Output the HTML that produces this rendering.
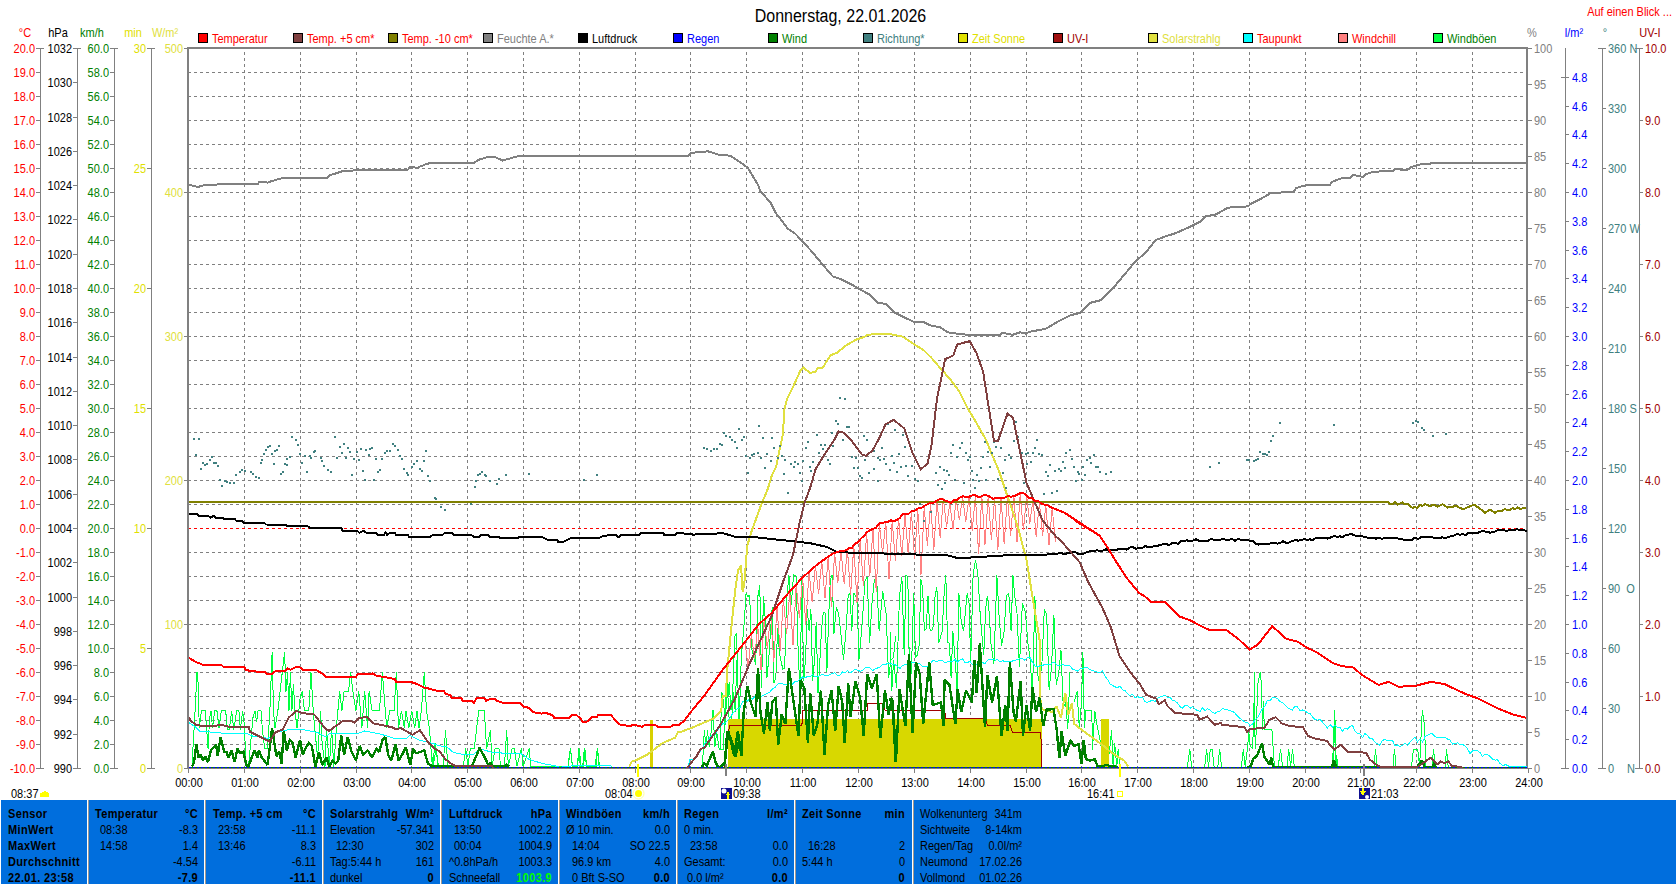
<!DOCTYPE html>
<html><head><meta charset="utf-8"><style>
html,body{margin:0;padding:0;background:#fff;width:1677px;height:884px;overflow:hidden}
svg{display:block;font-family:"Liberation Sans", sans-serif}
</style></head><body>
<svg width="1677" height="884" viewBox="0 0 1677 884" shape-rendering="crispEdges">
<text transform="translate(840.5,22) scale(1,1.1)" x="0" y="0" fill="#000" text-anchor="middle" font-size="16" font-weight="normal" >Donnerstag, 22.01.2026</text>
<text transform="translate(1672,16) scale(1,1.1)" x="0" y="0" fill="#ff0000" text-anchor="end" font-size="11" font-weight="normal" >Auf einen Blick ...</text>
<rect x="198.5" y="33.5" width="9" height="9" fill="#ff0000" stroke="#000" stroke-width="1"/>
<text transform="translate(212.0,43) scale(1,1.1)" x="0" y="0" fill="#ff0000" text-anchor="start" font-size="11" font-weight="normal" >Temperatur</text>
<rect x="293.5" y="33.5" width="9" height="9" fill="#804040" stroke="#000" stroke-width="1"/>
<text transform="translate(307.0,43) scale(1,1.1)" x="0" y="0" fill="#ff0000" text-anchor="start" font-size="11" font-weight="normal" >Temp. +5 cm*</text>
<rect x="388.5" y="33.5" width="9" height="9" fill="#808000" stroke="#000" stroke-width="1"/>
<text transform="translate(402.0,43) scale(1,1.1)" x="0" y="0" fill="#ff0000" text-anchor="start" font-size="11" font-weight="normal" >Temp. -10 cm*</text>
<rect x="483.5" y="33.5" width="9" height="9" fill="#808080" stroke="#000" stroke-width="1"/>
<text transform="translate(497.0,43) scale(1,1.1)" x="0" y="0" fill="#808080" text-anchor="start" font-size="11" font-weight="normal" >Feuchte A.*</text>
<rect x="578.5" y="33.5" width="9" height="9" fill="#000000" stroke="#000" stroke-width="1"/>
<text transform="translate(592.0,43) scale(1,1.1)" x="0" y="0" fill="#000000" text-anchor="start" font-size="11" font-weight="normal" >Luftdruck</text>
<rect x="673.5" y="33.5" width="9" height="9" fill="#0000ff" stroke="#000" stroke-width="1"/>
<text transform="translate(687.0,43) scale(1,1.1)" x="0" y="0" fill="#0000ff" text-anchor="start" font-size="11" font-weight="normal" >Regen</text>
<rect x="768.5" y="33.5" width="9" height="9" fill="#008000" stroke="#000" stroke-width="1"/>
<text transform="translate(782.0,43) scale(1,1.1)" x="0" y="0" fill="#008000" text-anchor="start" font-size="11" font-weight="normal" >Wind</text>
<rect x="863.5" y="33.5" width="9" height="9" fill="#408080" stroke="#000" stroke-width="1"/>
<text transform="translate(877.0,43) scale(1,1.1)" x="0" y="0" fill="#408080" text-anchor="start" font-size="11" font-weight="normal" >Richtung*</text>
<rect x="958.5" y="33.5" width="9" height="9" fill="#e0e000" stroke="#000" stroke-width="1"/>
<text transform="translate(972.0,43) scale(1,1.1)" x="0" y="0" fill="#e0e000" text-anchor="start" font-size="11" font-weight="normal" >Zeit Sonne</text>
<rect x="1053.5" y="33.5" width="9" height="9" fill="#a01010" stroke="#000" stroke-width="1"/>
<text transform="translate(1067.0,43) scale(1,1.1)" x="0" y="0" fill="#a00000" text-anchor="start" font-size="11" font-weight="normal" >UV-I</text>
<rect x="1148.5" y="33.5" width="9" height="9" fill="#e0e040" stroke="#000" stroke-width="1"/>
<text transform="translate(1162.0,43) scale(1,1.1)" x="0" y="0" fill="#e0e040" text-anchor="start" font-size="11" font-weight="normal" >Solarstrahlg</text>
<rect x="1243.5" y="33.5" width="9" height="9" fill="#00ffff" stroke="#000" stroke-width="1"/>
<text transform="translate(1257.0,43) scale(1,1.1)" x="0" y="0" fill="#ff0000" text-anchor="start" font-size="11" font-weight="normal" >Taupunkt</text>
<rect x="1338.5" y="33.5" width="9" height="9" fill="#ff8080" stroke="#000" stroke-width="1"/>
<text transform="translate(1352.0,43) scale(1,1.1)" x="0" y="0" fill="#ff0000" text-anchor="start" font-size="11" font-weight="normal" >Windchill</text>
<rect x="1433.5" y="33.5" width="9" height="9" fill="#00ff40" stroke="#000" stroke-width="1"/>
<text transform="translate(1447.0,43) scale(1,1.1)" x="0" y="0" fill="#008000" text-anchor="start" font-size="11" font-weight="normal" >Windböen</text>
<line x1="40.5" y1="48" x2="40.5" y2="768" stroke="#808080" stroke-width="1" />
<line x1="77.5" y1="48" x2="77.5" y2="768" stroke="#808080" stroke-width="1" />
<line x1="114.5" y1="48" x2="114.5" y2="768" stroke="#808080" stroke-width="1" />
<line x1="151.5" y1="48" x2="151.5" y2="768" stroke="#808080" stroke-width="1" />
<text transform="translate(25,37) scale(1,1.1)" x="0" y="0" fill="#ff0000" text-anchor="middle" font-size="11" font-weight="normal" >°C</text>
<line x1="36" y1="48.5" x2="44" y2="48.5" stroke="#808080" stroke-width="1" />
<text transform="translate(35,53) scale(1,1.1)" x="0" y="0" fill="#ff0000" text-anchor="end" font-size="11" font-weight="normal" >20.0</text>
<line x1="36" y1="72.5" x2="41" y2="72.5" stroke="#808080" stroke-width="1" />
<text transform="translate(35,77) scale(1,1.1)" x="0" y="0" fill="#ff0000" text-anchor="end" font-size="11" font-weight="normal" >19.0</text>
<line x1="36" y1="96.5" x2="41" y2="96.5" stroke="#808080" stroke-width="1" />
<text transform="translate(35,101) scale(1,1.1)" x="0" y="0" fill="#ff0000" text-anchor="end" font-size="11" font-weight="normal" >18.0</text>
<line x1="36" y1="120.5" x2="41" y2="120.5" stroke="#808080" stroke-width="1" />
<text transform="translate(35,125) scale(1,1.1)" x="0" y="0" fill="#ff0000" text-anchor="end" font-size="11" font-weight="normal" >17.0</text>
<line x1="36" y1="144.5" x2="41" y2="144.5" stroke="#808080" stroke-width="1" />
<text transform="translate(35,149) scale(1,1.1)" x="0" y="0" fill="#ff0000" text-anchor="end" font-size="11" font-weight="normal" >16.0</text>
<line x1="36" y1="168.5" x2="41" y2="168.5" stroke="#808080" stroke-width="1" />
<text transform="translate(35,173) scale(1,1.1)" x="0" y="0" fill="#ff0000" text-anchor="end" font-size="11" font-weight="normal" >15.0</text>
<line x1="36" y1="192.5" x2="41" y2="192.5" stroke="#808080" stroke-width="1" />
<text transform="translate(35,197) scale(1,1.1)" x="0" y="0" fill="#ff0000" text-anchor="end" font-size="11" font-weight="normal" >14.0</text>
<line x1="36" y1="216.5" x2="41" y2="216.5" stroke="#808080" stroke-width="1" />
<text transform="translate(35,221) scale(1,1.1)" x="0" y="0" fill="#ff0000" text-anchor="end" font-size="11" font-weight="normal" >13.0</text>
<line x1="36" y1="240.5" x2="41" y2="240.5" stroke="#808080" stroke-width="1" />
<text transform="translate(35,245) scale(1,1.1)" x="0" y="0" fill="#ff0000" text-anchor="end" font-size="11" font-weight="normal" >12.0</text>
<line x1="36" y1="264.5" x2="41" y2="264.5" stroke="#808080" stroke-width="1" />
<text transform="translate(35,269) scale(1,1.1)" x="0" y="0" fill="#ff0000" text-anchor="end" font-size="11" font-weight="normal" >11.0</text>
<line x1="36" y1="288.5" x2="41" y2="288.5" stroke="#808080" stroke-width="1" />
<text transform="translate(35,293) scale(1,1.1)" x="0" y="0" fill="#ff0000" text-anchor="end" font-size="11" font-weight="normal" >10.0</text>
<line x1="36" y1="312.5" x2="41" y2="312.5" stroke="#808080" stroke-width="1" />
<text transform="translate(35,317) scale(1,1.1)" x="0" y="0" fill="#ff0000" text-anchor="end" font-size="11" font-weight="normal" >9.0</text>
<line x1="36" y1="336.5" x2="41" y2="336.5" stroke="#808080" stroke-width="1" />
<text transform="translate(35,341) scale(1,1.1)" x="0" y="0" fill="#ff0000" text-anchor="end" font-size="11" font-weight="normal" >8.0</text>
<line x1="36" y1="360.5" x2="41" y2="360.5" stroke="#808080" stroke-width="1" />
<text transform="translate(35,365) scale(1,1.1)" x="0" y="0" fill="#ff0000" text-anchor="end" font-size="11" font-weight="normal" >7.0</text>
<line x1="36" y1="384.5" x2="41" y2="384.5" stroke="#808080" stroke-width="1" />
<text transform="translate(35,389) scale(1,1.1)" x="0" y="0" fill="#ff0000" text-anchor="end" font-size="11" font-weight="normal" >6.0</text>
<line x1="36" y1="408.5" x2="41" y2="408.5" stroke="#808080" stroke-width="1" />
<text transform="translate(35,413) scale(1,1.1)" x="0" y="0" fill="#ff0000" text-anchor="end" font-size="11" font-weight="normal" >5.0</text>
<line x1="36" y1="432.5" x2="41" y2="432.5" stroke="#808080" stroke-width="1" />
<text transform="translate(35,437) scale(1,1.1)" x="0" y="0" fill="#ff0000" text-anchor="end" font-size="11" font-weight="normal" >4.0</text>
<line x1="36" y1="456.5" x2="41" y2="456.5" stroke="#808080" stroke-width="1" />
<text transform="translate(35,461) scale(1,1.1)" x="0" y="0" fill="#ff0000" text-anchor="end" font-size="11" font-weight="normal" >3.0</text>
<line x1="36" y1="480.5" x2="41" y2="480.5" stroke="#808080" stroke-width="1" />
<text transform="translate(35,485) scale(1,1.1)" x="0" y="0" fill="#ff0000" text-anchor="end" font-size="11" font-weight="normal" >2.0</text>
<line x1="36" y1="504.5" x2="41" y2="504.5" stroke="#808080" stroke-width="1" />
<text transform="translate(35,509) scale(1,1.1)" x="0" y="0" fill="#ff0000" text-anchor="end" font-size="11" font-weight="normal" >1.0</text>
<line x1="36" y1="528.5" x2="41" y2="528.5" stroke="#808080" stroke-width="1" />
<text transform="translate(35,533) scale(1,1.1)" x="0" y="0" fill="#ff0000" text-anchor="end" font-size="11" font-weight="normal" >0.0</text>
<line x1="36" y1="552.5" x2="41" y2="552.5" stroke="#808080" stroke-width="1" />
<text transform="translate(35,557) scale(1,1.1)" x="0" y="0" fill="#ff0000" text-anchor="end" font-size="11" font-weight="normal" >-1.0</text>
<line x1="36" y1="576.5" x2="41" y2="576.5" stroke="#808080" stroke-width="1" />
<text transform="translate(35,581) scale(1,1.1)" x="0" y="0" fill="#ff0000" text-anchor="end" font-size="11" font-weight="normal" >-2.0</text>
<line x1="36" y1="600.5" x2="41" y2="600.5" stroke="#808080" stroke-width="1" />
<text transform="translate(35,605) scale(1,1.1)" x="0" y="0" fill="#ff0000" text-anchor="end" font-size="11" font-weight="normal" >-3.0</text>
<line x1="36" y1="624.5" x2="41" y2="624.5" stroke="#808080" stroke-width="1" />
<text transform="translate(35,629) scale(1,1.1)" x="0" y="0" fill="#ff0000" text-anchor="end" font-size="11" font-weight="normal" >-4.0</text>
<line x1="36" y1="648.5" x2="41" y2="648.5" stroke="#808080" stroke-width="1" />
<text transform="translate(35,653) scale(1,1.1)" x="0" y="0" fill="#ff0000" text-anchor="end" font-size="11" font-weight="normal" >-5.0</text>
<line x1="36" y1="672.5" x2="41" y2="672.5" stroke="#808080" stroke-width="1" />
<text transform="translate(35,677) scale(1,1.1)" x="0" y="0" fill="#ff0000" text-anchor="end" font-size="11" font-weight="normal" >-6.0</text>
<line x1="36" y1="696.5" x2="41" y2="696.5" stroke="#808080" stroke-width="1" />
<text transform="translate(35,701) scale(1,1.1)" x="0" y="0" fill="#ff0000" text-anchor="end" font-size="11" font-weight="normal" >-7.0</text>
<line x1="36" y1="720.5" x2="41" y2="720.5" stroke="#808080" stroke-width="1" />
<text transform="translate(35,725) scale(1,1.1)" x="0" y="0" fill="#ff0000" text-anchor="end" font-size="11" font-weight="normal" >-8.0</text>
<line x1="36" y1="744.5" x2="41" y2="744.5" stroke="#808080" stroke-width="1" />
<text transform="translate(35,749) scale(1,1.1)" x="0" y="0" fill="#ff0000" text-anchor="end" font-size="11" font-weight="normal" >-9.0</text>
<line x1="36" y1="768.5" x2="44" y2="768.5" stroke="#808080" stroke-width="1" />
<text transform="translate(35,773) scale(1,1.1)" x="0" y="0" fill="#ff0000" text-anchor="end" font-size="11" font-weight="normal" >-10.0</text>
<text transform="translate(58,37) scale(1,1.1)" x="0" y="0" fill="#000" text-anchor="middle" font-size="11" font-weight="normal" >hPa</text>
<line x1="73" y1="48.5" x2="81" y2="48.5" stroke="#808080" stroke-width="1" />
<text transform="translate(72,53) scale(1,1.1)" x="0" y="0" fill="#000" text-anchor="end" font-size="11" font-weight="normal" >1032</text>
<line x1="73" y1="82.5" x2="78" y2="82.5" stroke="#808080" stroke-width="1" />
<text transform="translate(72,87) scale(1,1.1)" x="0" y="0" fill="#000" text-anchor="end" font-size="11" font-weight="normal" >1030</text>
<line x1="73" y1="117.5" x2="78" y2="117.5" stroke="#808080" stroke-width="1" />
<text transform="translate(72,122) scale(1,1.1)" x="0" y="0" fill="#000" text-anchor="end" font-size="11" font-weight="normal" >1028</text>
<line x1="73" y1="151.5" x2="78" y2="151.5" stroke="#808080" stroke-width="1" />
<text transform="translate(72,156) scale(1,1.1)" x="0" y="0" fill="#000" text-anchor="end" font-size="11" font-weight="normal" >1026</text>
<line x1="73" y1="185.5" x2="78" y2="185.5" stroke="#808080" stroke-width="1" />
<text transform="translate(72,190) scale(1,1.1)" x="0" y="0" fill="#000" text-anchor="end" font-size="11" font-weight="normal" >1024</text>
<line x1="73" y1="219.5" x2="78" y2="219.5" stroke="#808080" stroke-width="1" />
<text transform="translate(72,224) scale(1,1.1)" x="0" y="0" fill="#000" text-anchor="end" font-size="11" font-weight="normal" >1022</text>
<line x1="73" y1="254.5" x2="78" y2="254.5" stroke="#808080" stroke-width="1" />
<text transform="translate(72,259) scale(1,1.1)" x="0" y="0" fill="#000" text-anchor="end" font-size="11" font-weight="normal" >1020</text>
<line x1="73" y1="288.5" x2="78" y2="288.5" stroke="#808080" stroke-width="1" />
<text transform="translate(72,293) scale(1,1.1)" x="0" y="0" fill="#000" text-anchor="end" font-size="11" font-weight="normal" >1018</text>
<line x1="73" y1="322.5" x2="78" y2="322.5" stroke="#808080" stroke-width="1" />
<text transform="translate(72,327) scale(1,1.1)" x="0" y="0" fill="#000" text-anchor="end" font-size="11" font-weight="normal" >1016</text>
<line x1="73" y1="357.5" x2="78" y2="357.5" stroke="#808080" stroke-width="1" />
<text transform="translate(72,362) scale(1,1.1)" x="0" y="0" fill="#000" text-anchor="end" font-size="11" font-weight="normal" >1014</text>
<line x1="73" y1="391.5" x2="78" y2="391.5" stroke="#808080" stroke-width="1" />
<text transform="translate(72,396) scale(1,1.1)" x="0" y="0" fill="#000" text-anchor="end" font-size="11" font-weight="normal" >1012</text>
<line x1="73" y1="425.5" x2="78" y2="425.5" stroke="#808080" stroke-width="1" />
<text transform="translate(72,430) scale(1,1.1)" x="0" y="0" fill="#000" text-anchor="end" font-size="11" font-weight="normal" >1010</text>
<line x1="73" y1="459.5" x2="78" y2="459.5" stroke="#808080" stroke-width="1" />
<text transform="translate(72,464) scale(1,1.1)" x="0" y="0" fill="#000" text-anchor="end" font-size="11" font-weight="normal" >1008</text>
<line x1="73" y1="494.5" x2="78" y2="494.5" stroke="#808080" stroke-width="1" />
<text transform="translate(72,499) scale(1,1.1)" x="0" y="0" fill="#000" text-anchor="end" font-size="11" font-weight="normal" >1006</text>
<line x1="73" y1="528.5" x2="78" y2="528.5" stroke="#808080" stroke-width="1" />
<text transform="translate(72,533) scale(1,1.1)" x="0" y="0" fill="#000" text-anchor="end" font-size="11" font-weight="normal" >1004</text>
<line x1="73" y1="562.5" x2="78" y2="562.5" stroke="#808080" stroke-width="1" />
<text transform="translate(72,567) scale(1,1.1)" x="0" y="0" fill="#000" text-anchor="end" font-size="11" font-weight="normal" >1002</text>
<line x1="73" y1="597.5" x2="78" y2="597.5" stroke="#808080" stroke-width="1" />
<text transform="translate(72,602) scale(1,1.1)" x="0" y="0" fill="#000" text-anchor="end" font-size="11" font-weight="normal" >1000</text>
<line x1="73" y1="631.5" x2="78" y2="631.5" stroke="#808080" stroke-width="1" />
<text transform="translate(72,636) scale(1,1.1)" x="0" y="0" fill="#000" text-anchor="end" font-size="11" font-weight="normal" >998</text>
<line x1="73" y1="665.5" x2="78" y2="665.5" stroke="#808080" stroke-width="1" />
<text transform="translate(72,670) scale(1,1.1)" x="0" y="0" fill="#000" text-anchor="end" font-size="11" font-weight="normal" >996</text>
<line x1="73" y1="699.5" x2="78" y2="699.5" stroke="#808080" stroke-width="1" />
<text transform="translate(72,704) scale(1,1.1)" x="0" y="0" fill="#000" text-anchor="end" font-size="11" font-weight="normal" >994</text>
<line x1="73" y1="734.5" x2="78" y2="734.5" stroke="#808080" stroke-width="1" />
<text transform="translate(72,739) scale(1,1.1)" x="0" y="0" fill="#000" text-anchor="end" font-size="11" font-weight="normal" >992</text>
<line x1="73" y1="768.5" x2="81" y2="768.5" stroke="#808080" stroke-width="1" />
<text transform="translate(72,773) scale(1,1.1)" x="0" y="0" fill="#000" text-anchor="end" font-size="11" font-weight="normal" >990</text>
<text transform="translate(92,37) scale(1,1.1)" x="0" y="0" fill="#008000" text-anchor="middle" font-size="11" font-weight="normal" >km/h</text>
<line x1="110" y1="48.5" x2="118" y2="48.5" stroke="#808080" stroke-width="1" />
<text transform="translate(109,53) scale(1,1.1)" x="0" y="0" fill="#008000" text-anchor="end" font-size="11" font-weight="normal" >60.0</text>
<line x1="110" y1="72.5" x2="115" y2="72.5" stroke="#808080" stroke-width="1" />
<text transform="translate(109,77) scale(1,1.1)" x="0" y="0" fill="#008000" text-anchor="end" font-size="11" font-weight="normal" >58.0</text>
<line x1="110" y1="96.5" x2="115" y2="96.5" stroke="#808080" stroke-width="1" />
<text transform="translate(109,101) scale(1,1.1)" x="0" y="0" fill="#008000" text-anchor="end" font-size="11" font-weight="normal" >56.0</text>
<line x1="110" y1="120.5" x2="115" y2="120.5" stroke="#808080" stroke-width="1" />
<text transform="translate(109,125) scale(1,1.1)" x="0" y="0" fill="#008000" text-anchor="end" font-size="11" font-weight="normal" >54.0</text>
<line x1="110" y1="144.5" x2="115" y2="144.5" stroke="#808080" stroke-width="1" />
<text transform="translate(109,149) scale(1,1.1)" x="0" y="0" fill="#008000" text-anchor="end" font-size="11" font-weight="normal" >52.0</text>
<line x1="110" y1="168.5" x2="115" y2="168.5" stroke="#808080" stroke-width="1" />
<text transform="translate(109,173) scale(1,1.1)" x="0" y="0" fill="#008000" text-anchor="end" font-size="11" font-weight="normal" >50.0</text>
<line x1="110" y1="192.5" x2="115" y2="192.5" stroke="#808080" stroke-width="1" />
<text transform="translate(109,197) scale(1,1.1)" x="0" y="0" fill="#008000" text-anchor="end" font-size="11" font-weight="normal" >48.0</text>
<line x1="110" y1="216.5" x2="115" y2="216.5" stroke="#808080" stroke-width="1" />
<text transform="translate(109,221) scale(1,1.1)" x="0" y="0" fill="#008000" text-anchor="end" font-size="11" font-weight="normal" >46.0</text>
<line x1="110" y1="240.5" x2="115" y2="240.5" stroke="#808080" stroke-width="1" />
<text transform="translate(109,245) scale(1,1.1)" x="0" y="0" fill="#008000" text-anchor="end" font-size="11" font-weight="normal" >44.0</text>
<line x1="110" y1="264.5" x2="115" y2="264.5" stroke="#808080" stroke-width="1" />
<text transform="translate(109,269) scale(1,1.1)" x="0" y="0" fill="#008000" text-anchor="end" font-size="11" font-weight="normal" >42.0</text>
<line x1="110" y1="288.5" x2="115" y2="288.5" stroke="#808080" stroke-width="1" />
<text transform="translate(109,293) scale(1,1.1)" x="0" y="0" fill="#008000" text-anchor="end" font-size="11" font-weight="normal" >40.0</text>
<line x1="110" y1="312.5" x2="115" y2="312.5" stroke="#808080" stroke-width="1" />
<text transform="translate(109,317) scale(1,1.1)" x="0" y="0" fill="#008000" text-anchor="end" font-size="11" font-weight="normal" >38.0</text>
<line x1="110" y1="336.5" x2="115" y2="336.5" stroke="#808080" stroke-width="1" />
<text transform="translate(109,341) scale(1,1.1)" x="0" y="0" fill="#008000" text-anchor="end" font-size="11" font-weight="normal" >36.0</text>
<line x1="110" y1="360.5" x2="115" y2="360.5" stroke="#808080" stroke-width="1" />
<text transform="translate(109,365) scale(1,1.1)" x="0" y="0" fill="#008000" text-anchor="end" font-size="11" font-weight="normal" >34.0</text>
<line x1="110" y1="384.5" x2="115" y2="384.5" stroke="#808080" stroke-width="1" />
<text transform="translate(109,389) scale(1,1.1)" x="0" y="0" fill="#008000" text-anchor="end" font-size="11" font-weight="normal" >32.0</text>
<line x1="110" y1="408.5" x2="115" y2="408.5" stroke="#808080" stroke-width="1" />
<text transform="translate(109,413) scale(1,1.1)" x="0" y="0" fill="#008000" text-anchor="end" font-size="11" font-weight="normal" >30.0</text>
<line x1="110" y1="432.5" x2="115" y2="432.5" stroke="#808080" stroke-width="1" />
<text transform="translate(109,437) scale(1,1.1)" x="0" y="0" fill="#008000" text-anchor="end" font-size="11" font-weight="normal" >28.0</text>
<line x1="110" y1="456.5" x2="115" y2="456.5" stroke="#808080" stroke-width="1" />
<text transform="translate(109,461) scale(1,1.1)" x="0" y="0" fill="#008000" text-anchor="end" font-size="11" font-weight="normal" >26.0</text>
<line x1="110" y1="480.5" x2="115" y2="480.5" stroke="#808080" stroke-width="1" />
<text transform="translate(109,485) scale(1,1.1)" x="0" y="0" fill="#008000" text-anchor="end" font-size="11" font-weight="normal" >24.0</text>
<line x1="110" y1="504.5" x2="115" y2="504.5" stroke="#808080" stroke-width="1" />
<text transform="translate(109,509) scale(1,1.1)" x="0" y="0" fill="#008000" text-anchor="end" font-size="11" font-weight="normal" >22.0</text>
<line x1="110" y1="528.5" x2="115" y2="528.5" stroke="#808080" stroke-width="1" />
<text transform="translate(109,533) scale(1,1.1)" x="0" y="0" fill="#008000" text-anchor="end" font-size="11" font-weight="normal" >20.0</text>
<line x1="110" y1="552.5" x2="115" y2="552.5" stroke="#808080" stroke-width="1" />
<text transform="translate(109,557) scale(1,1.1)" x="0" y="0" fill="#008000" text-anchor="end" font-size="11" font-weight="normal" >18.0</text>
<line x1="110" y1="576.5" x2="115" y2="576.5" stroke="#808080" stroke-width="1" />
<text transform="translate(109,581) scale(1,1.1)" x="0" y="0" fill="#008000" text-anchor="end" font-size="11" font-weight="normal" >16.0</text>
<line x1="110" y1="600.5" x2="115" y2="600.5" stroke="#808080" stroke-width="1" />
<text transform="translate(109,605) scale(1,1.1)" x="0" y="0" fill="#008000" text-anchor="end" font-size="11" font-weight="normal" >14.0</text>
<line x1="110" y1="624.5" x2="115" y2="624.5" stroke="#808080" stroke-width="1" />
<text transform="translate(109,629) scale(1,1.1)" x="0" y="0" fill="#008000" text-anchor="end" font-size="11" font-weight="normal" >12.0</text>
<line x1="110" y1="648.5" x2="115" y2="648.5" stroke="#808080" stroke-width="1" />
<text transform="translate(109,653) scale(1,1.1)" x="0" y="0" fill="#008000" text-anchor="end" font-size="11" font-weight="normal" >10.0</text>
<line x1="110" y1="672.5" x2="115" y2="672.5" stroke="#808080" stroke-width="1" />
<text transform="translate(109,677) scale(1,1.1)" x="0" y="0" fill="#008000" text-anchor="end" font-size="11" font-weight="normal" >8.0</text>
<line x1="110" y1="696.5" x2="115" y2="696.5" stroke="#808080" stroke-width="1" />
<text transform="translate(109,701) scale(1,1.1)" x="0" y="0" fill="#008000" text-anchor="end" font-size="11" font-weight="normal" >6.0</text>
<line x1="110" y1="720.5" x2="115" y2="720.5" stroke="#808080" stroke-width="1" />
<text transform="translate(109,725) scale(1,1.1)" x="0" y="0" fill="#008000" text-anchor="end" font-size="11" font-weight="normal" >4.0</text>
<line x1="110" y1="744.5" x2="115" y2="744.5" stroke="#808080" stroke-width="1" />
<text transform="translate(109,749) scale(1,1.1)" x="0" y="0" fill="#008000" text-anchor="end" font-size="11" font-weight="normal" >2.0</text>
<line x1="110" y1="768.5" x2="118" y2="768.5" stroke="#808080" stroke-width="1" />
<text transform="translate(109,773) scale(1,1.1)" x="0" y="0" fill="#008000" text-anchor="end" font-size="11" font-weight="normal" >0.0</text>
<text transform="translate(133,37) scale(1,1.1)" x="0" y="0" fill="#e0e000" text-anchor="middle" font-size="11" font-weight="normal" >min</text>
<line x1="147" y1="48.5" x2="155" y2="48.5" stroke="#808080" stroke-width="1" />
<text transform="translate(146,53) scale(1,1.1)" x="0" y="0" fill="#e0e000" text-anchor="end" font-size="11" font-weight="normal" >30</text>
<line x1="147" y1="168.5" x2="152" y2="168.5" stroke="#808080" stroke-width="1" />
<text transform="translate(146,173) scale(1,1.1)" x="0" y="0" fill="#e0e000" text-anchor="end" font-size="11" font-weight="normal" >25</text>
<line x1="147" y1="288.5" x2="152" y2="288.5" stroke="#808080" stroke-width="1" />
<text transform="translate(146,293) scale(1,1.1)" x="0" y="0" fill="#e0e000" text-anchor="end" font-size="11" font-weight="normal" >20</text>
<line x1="147" y1="408.5" x2="152" y2="408.5" stroke="#808080" stroke-width="1" />
<text transform="translate(146,413) scale(1,1.1)" x="0" y="0" fill="#e0e000" text-anchor="end" font-size="11" font-weight="normal" >15</text>
<line x1="147" y1="528.5" x2="152" y2="528.5" stroke="#808080" stroke-width="1" />
<text transform="translate(146,533) scale(1,1.1)" x="0" y="0" fill="#e0e000" text-anchor="end" font-size="11" font-weight="normal" >10</text>
<line x1="147" y1="648.5" x2="152" y2="648.5" stroke="#808080" stroke-width="1" />
<text transform="translate(146,653) scale(1,1.1)" x="0" y="0" fill="#e0e000" text-anchor="end" font-size="11" font-weight="normal" >5</text>
<line x1="147" y1="768.5" x2="155" y2="768.5" stroke="#808080" stroke-width="1" />
<text transform="translate(146,773) scale(1,1.1)" x="0" y="0" fill="#e0e000" text-anchor="end" font-size="11" font-weight="normal" >0</text>
<text transform="translate(165,37) scale(1,1.1)" x="0" y="0" fill="#e0e040" text-anchor="middle" font-size="11" font-weight="normal" >W/m²</text>
<line x1="184" y1="48.5" x2="188" y2="48.5" stroke="#808080" stroke-width="1" />
<text transform="translate(183,53) scale(1,1.1)" x="0" y="0" fill="#e0e040" text-anchor="end" font-size="11" font-weight="normal" >500</text>
<line x1="184" y1="192.5" x2="188" y2="192.5" stroke="#808080" stroke-width="1" />
<text transform="translate(183,197) scale(1,1.1)" x="0" y="0" fill="#e0e040" text-anchor="end" font-size="11" font-weight="normal" >400</text>
<line x1="184" y1="336.5" x2="188" y2="336.5" stroke="#808080" stroke-width="1" />
<text transform="translate(183,341) scale(1,1.1)" x="0" y="0" fill="#e0e040" text-anchor="end" font-size="11" font-weight="normal" >300</text>
<line x1="184" y1="480.5" x2="188" y2="480.5" stroke="#808080" stroke-width="1" />
<text transform="translate(183,485) scale(1,1.1)" x="0" y="0" fill="#e0e040" text-anchor="end" font-size="11" font-weight="normal" >200</text>
<line x1="184" y1="624.5" x2="188" y2="624.5" stroke="#808080" stroke-width="1" />
<text transform="translate(183,629) scale(1,1.1)" x="0" y="0" fill="#e0e040" text-anchor="end" font-size="11" font-weight="normal" >100</text>
<line x1="184" y1="768.5" x2="188" y2="768.5" stroke="#808080" stroke-width="1" />
<text transform="translate(183,773) scale(1,1.1)" x="0" y="0" fill="#e0e040" text-anchor="end" font-size="11" font-weight="normal" >0</text>
<line x1="188" y1="72.5" x2="1526" y2="72.5" stroke="#808080" stroke-width="1" stroke-dasharray="3,3"/>
<line x1="188" y1="96.5" x2="1526" y2="96.5" stroke="#808080" stroke-width="1" stroke-dasharray="3,3"/>
<line x1="188" y1="120.5" x2="1526" y2="120.5" stroke="#808080" stroke-width="1" stroke-dasharray="3,3"/>
<line x1="188" y1="144.5" x2="1526" y2="144.5" stroke="#808080" stroke-width="1" stroke-dasharray="3,3"/>
<line x1="188" y1="168.5" x2="1526" y2="168.5" stroke="#808080" stroke-width="1" stroke-dasharray="3,3"/>
<line x1="188" y1="192.5" x2="1526" y2="192.5" stroke="#808080" stroke-width="1" stroke-dasharray="3,3"/>
<line x1="188" y1="216.5" x2="1526" y2="216.5" stroke="#808080" stroke-width="1" stroke-dasharray="3,3"/>
<line x1="188" y1="240.5" x2="1526" y2="240.5" stroke="#808080" stroke-width="1" stroke-dasharray="3,3"/>
<line x1="188" y1="264.5" x2="1526" y2="264.5" stroke="#808080" stroke-width="1" stroke-dasharray="3,3"/>
<line x1="188" y1="288.5" x2="1526" y2="288.5" stroke="#808080" stroke-width="1" stroke-dasharray="3,3"/>
<line x1="188" y1="312.5" x2="1526" y2="312.5" stroke="#808080" stroke-width="1" stroke-dasharray="3,3"/>
<line x1="188" y1="336.5" x2="1526" y2="336.5" stroke="#808080" stroke-width="1" stroke-dasharray="3,3"/>
<line x1="188" y1="360.5" x2="1526" y2="360.5" stroke="#808080" stroke-width="1" stroke-dasharray="3,3"/>
<line x1="188" y1="384.5" x2="1526" y2="384.5" stroke="#808080" stroke-width="1" stroke-dasharray="3,3"/>
<line x1="188" y1="408.5" x2="1526" y2="408.5" stroke="#808080" stroke-width="1" stroke-dasharray="3,3"/>
<line x1="188" y1="432.5" x2="1526" y2="432.5" stroke="#808080" stroke-width="1" stroke-dasharray="3,3"/>
<line x1="188" y1="456.5" x2="1526" y2="456.5" stroke="#808080" stroke-width="1" stroke-dasharray="3,3"/>
<line x1="188" y1="480.5" x2="1526" y2="480.5" stroke="#808080" stroke-width="1" stroke-dasharray="3,3"/>
<line x1="188" y1="504.5" x2="1526" y2="504.5" stroke="#808080" stroke-width="1" stroke-dasharray="3,3"/>
<line x1="188" y1="552.5" x2="1526" y2="552.5" stroke="#808080" stroke-width="1" stroke-dasharray="3,3"/>
<line x1="188" y1="576.5" x2="1526" y2="576.5" stroke="#808080" stroke-width="1" stroke-dasharray="3,3"/>
<line x1="188" y1="600.5" x2="1526" y2="600.5" stroke="#808080" stroke-width="1" stroke-dasharray="3,3"/>
<line x1="188" y1="624.5" x2="1526" y2="624.5" stroke="#808080" stroke-width="1" stroke-dasharray="3,3"/>
<line x1="188" y1="648.5" x2="1526" y2="648.5" stroke="#808080" stroke-width="1" stroke-dasharray="3,3"/>
<line x1="188" y1="672.5" x2="1526" y2="672.5" stroke="#808080" stroke-width="1" stroke-dasharray="3,3"/>
<line x1="188" y1="696.5" x2="1526" y2="696.5" stroke="#808080" stroke-width="1" stroke-dasharray="3,3"/>
<line x1="188" y1="720.5" x2="1526" y2="720.5" stroke="#808080" stroke-width="1" stroke-dasharray="3,3"/>
<line x1="188" y1="744.5" x2="1526" y2="744.5" stroke="#808080" stroke-width="1" stroke-dasharray="3,3"/>
<line x1="244.5" y1="52" x2="244.5" y2="768" stroke="#808080" stroke-width="1" stroke-dasharray="3,3"/>
<line x1="300.5" y1="52" x2="300.5" y2="768" stroke="#808080" stroke-width="1" stroke-dasharray="3,3"/>
<line x1="356.5" y1="52" x2="356.5" y2="768" stroke="#808080" stroke-width="1" stroke-dasharray="3,3"/>
<line x1="411.5" y1="52" x2="411.5" y2="768" stroke="#808080" stroke-width="1" stroke-dasharray="3,3"/>
<line x1="467.5" y1="52" x2="467.5" y2="768" stroke="#808080" stroke-width="1" stroke-dasharray="3,3"/>
<line x1="523.5" y1="52" x2="523.5" y2="768" stroke="#808080" stroke-width="1" stroke-dasharray="3,3"/>
<line x1="579.5" y1="52" x2="579.5" y2="768" stroke="#808080" stroke-width="1" stroke-dasharray="3,3"/>
<line x1="635.5" y1="52" x2="635.5" y2="768" stroke="#808080" stroke-width="1" stroke-dasharray="3,3"/>
<line x1="690.5" y1="52" x2="690.5" y2="768" stroke="#808080" stroke-width="1" stroke-dasharray="3,3"/>
<line x1="746.5" y1="52" x2="746.5" y2="768" stroke="#808080" stroke-width="1" stroke-dasharray="3,3"/>
<line x1="802.5" y1="52" x2="802.5" y2="768" stroke="#808080" stroke-width="1" stroke-dasharray="3,3"/>
<line x1="858.5" y1="52" x2="858.5" y2="768" stroke="#808080" stroke-width="1" stroke-dasharray="3,3"/>
<line x1="914.5" y1="52" x2="914.5" y2="768" stroke="#808080" stroke-width="1" stroke-dasharray="3,3"/>
<line x1="970.5" y1="52" x2="970.5" y2="768" stroke="#808080" stroke-width="1" stroke-dasharray="3,3"/>
<line x1="1026.5" y1="52" x2="1026.5" y2="768" stroke="#808080" stroke-width="1" stroke-dasharray="3,3"/>
<line x1="1081.5" y1="52" x2="1081.5" y2="768" stroke="#808080" stroke-width="1" stroke-dasharray="3,3"/>
<line x1="1137.5" y1="52" x2="1137.5" y2="768" stroke="#808080" stroke-width="1" stroke-dasharray="3,3"/>
<line x1="1193.5" y1="52" x2="1193.5" y2="768" stroke="#808080" stroke-width="1" stroke-dasharray="3,3"/>
<line x1="1249.5" y1="52" x2="1249.5" y2="768" stroke="#808080" stroke-width="1" stroke-dasharray="3,3"/>
<line x1="1305.5" y1="52" x2="1305.5" y2="768" stroke="#808080" stroke-width="1" stroke-dasharray="3,3"/>
<line x1="1360.5" y1="52" x2="1360.5" y2="768" stroke="#808080" stroke-width="1" stroke-dasharray="3,3"/>
<line x1="1416.5" y1="52" x2="1416.5" y2="768" stroke="#808080" stroke-width="1" stroke-dasharray="3,3"/>
<line x1="1472.5" y1="52" x2="1472.5" y2="768" stroke="#808080" stroke-width="1" stroke-dasharray="3,3"/>
<line x1="188" y1="528.5" x2="1526" y2="528.5" stroke="#ff0000" stroke-width="1" stroke-dasharray="3,3"/>
<rect x="187" y="47" width="1341" height="2" fill="#808080"/>
<rect x="187" y="767" width="1341" height="2" fill="#808080"/>
<rect x="187" y="47" width="2" height="722" fill="#808080"/>
<rect x="1526" y="47" width="2" height="722" fill="#808080"/>
<line x1="188.5" y1="768" x2="188.5" y2="773" stroke="#808080" stroke-width="1" />
<text transform="translate(189,787) scale(1,1.1)" x="0" y="0" fill="#000" text-anchor="middle" font-size="11" font-weight="normal" >00:00</text>
<line x1="244.5" y1="768" x2="244.5" y2="773" stroke="#808080" stroke-width="1" />
<text transform="translate(245,787) scale(1,1.1)" x="0" y="0" fill="#000" text-anchor="middle" font-size="11" font-weight="normal" >01:00</text>
<line x1="300.5" y1="768" x2="300.5" y2="773" stroke="#808080" stroke-width="1" />
<text transform="translate(301,787) scale(1,1.1)" x="0" y="0" fill="#000" text-anchor="middle" font-size="11" font-weight="normal" >02:00</text>
<line x1="356.5" y1="768" x2="356.5" y2="773" stroke="#808080" stroke-width="1" />
<text transform="translate(357,787) scale(1,1.1)" x="0" y="0" fill="#000" text-anchor="middle" font-size="11" font-weight="normal" >03:00</text>
<line x1="411.5" y1="768" x2="411.5" y2="773" stroke="#808080" stroke-width="1" />
<text transform="translate(412,787) scale(1,1.1)" x="0" y="0" fill="#000" text-anchor="middle" font-size="11" font-weight="normal" >04:00</text>
<line x1="467.5" y1="768" x2="467.5" y2="773" stroke="#808080" stroke-width="1" />
<text transform="translate(468,787) scale(1,1.1)" x="0" y="0" fill="#000" text-anchor="middle" font-size="11" font-weight="normal" >05:00</text>
<line x1="523.5" y1="768" x2="523.5" y2="773" stroke="#808080" stroke-width="1" />
<text transform="translate(524,787) scale(1,1.1)" x="0" y="0" fill="#000" text-anchor="middle" font-size="11" font-weight="normal" >06:00</text>
<line x1="579.5" y1="768" x2="579.5" y2="773" stroke="#808080" stroke-width="1" />
<text transform="translate(580,787) scale(1,1.1)" x="0" y="0" fill="#000" text-anchor="middle" font-size="11" font-weight="normal" >07:00</text>
<line x1="635.5" y1="768" x2="635.5" y2="773" stroke="#808080" stroke-width="1" />
<text transform="translate(636,787) scale(1,1.1)" x="0" y="0" fill="#000" text-anchor="middle" font-size="11" font-weight="normal" >08:00</text>
<line x1="690.5" y1="768" x2="690.5" y2="773" stroke="#808080" stroke-width="1" />
<text transform="translate(691,787) scale(1,1.1)" x="0" y="0" fill="#000" text-anchor="middle" font-size="11" font-weight="normal" >09:00</text>
<line x1="746.5" y1="768" x2="746.5" y2="773" stroke="#808080" stroke-width="1" />
<text transform="translate(747,787) scale(1,1.1)" x="0" y="0" fill="#000" text-anchor="middle" font-size="11" font-weight="normal" >10:00</text>
<line x1="802.5" y1="768" x2="802.5" y2="773" stroke="#808080" stroke-width="1" />
<text transform="translate(803,787) scale(1,1.1)" x="0" y="0" fill="#000" text-anchor="middle" font-size="11" font-weight="normal" >11:00</text>
<line x1="858.5" y1="768" x2="858.5" y2="773" stroke="#808080" stroke-width="1" />
<text transform="translate(859,787) scale(1,1.1)" x="0" y="0" fill="#000" text-anchor="middle" font-size="11" font-weight="normal" >12:00</text>
<line x1="914.5" y1="768" x2="914.5" y2="773" stroke="#808080" stroke-width="1" />
<text transform="translate(915,787) scale(1,1.1)" x="0" y="0" fill="#000" text-anchor="middle" font-size="11" font-weight="normal" >13:00</text>
<line x1="970.5" y1="768" x2="970.5" y2="773" stroke="#808080" stroke-width="1" />
<text transform="translate(971,787) scale(1,1.1)" x="0" y="0" fill="#000" text-anchor="middle" font-size="11" font-weight="normal" >14:00</text>
<line x1="1026.5" y1="768" x2="1026.5" y2="773" stroke="#808080" stroke-width="1" />
<text transform="translate(1027,787) scale(1,1.1)" x="0" y="0" fill="#000" text-anchor="middle" font-size="11" font-weight="normal" >15:00</text>
<line x1="1081.5" y1="768" x2="1081.5" y2="773" stroke="#808080" stroke-width="1" />
<text transform="translate(1082,787) scale(1,1.1)" x="0" y="0" fill="#000" text-anchor="middle" font-size="11" font-weight="normal" >16:00</text>
<line x1="1137.5" y1="768" x2="1137.5" y2="773" stroke="#808080" stroke-width="1" />
<text transform="translate(1138,787) scale(1,1.1)" x="0" y="0" fill="#000" text-anchor="middle" font-size="11" font-weight="normal" >17:00</text>
<line x1="1193.5" y1="768" x2="1193.5" y2="773" stroke="#808080" stroke-width="1" />
<text transform="translate(1194,787) scale(1,1.1)" x="0" y="0" fill="#000" text-anchor="middle" font-size="11" font-weight="normal" >18:00</text>
<line x1="1249.5" y1="768" x2="1249.5" y2="773" stroke="#808080" stroke-width="1" />
<text transform="translate(1250,787) scale(1,1.1)" x="0" y="0" fill="#000" text-anchor="middle" font-size="11" font-weight="normal" >19:00</text>
<line x1="1305.5" y1="768" x2="1305.5" y2="773" stroke="#808080" stroke-width="1" />
<text transform="translate(1306,787) scale(1,1.1)" x="0" y="0" fill="#000" text-anchor="middle" font-size="11" font-weight="normal" >20:00</text>
<line x1="1360.5" y1="768" x2="1360.5" y2="773" stroke="#808080" stroke-width="1" />
<text transform="translate(1361,787) scale(1,1.1)" x="0" y="0" fill="#000" text-anchor="middle" font-size="11" font-weight="normal" >21:00</text>
<line x1="1416.5" y1="768" x2="1416.5" y2="773" stroke="#808080" stroke-width="1" />
<text transform="translate(1417,787) scale(1,1.1)" x="0" y="0" fill="#000" text-anchor="middle" font-size="11" font-weight="normal" >22:00</text>
<line x1="1472.5" y1="768" x2="1472.5" y2="773" stroke="#808080" stroke-width="1" />
<text transform="translate(1473,787) scale(1,1.1)" x="0" y="0" fill="#000" text-anchor="middle" font-size="11" font-weight="normal" >23:00</text>
<line x1="1528.5" y1="768" x2="1528.5" y2="773" stroke="#808080" stroke-width="1" />
<text transform="translate(1529,787) scale(1,1.1)" x="0" y="0" fill="#000" text-anchor="middle" font-size="11" font-weight="normal" >24:00</text>
<text transform="translate(1532,37) scale(1,1.1)" x="0" y="0" fill="#808080" text-anchor="middle" font-size="11" font-weight="normal" >%</text>
<line x1="1528" y1="48.5" x2="1532" y2="48.5" stroke="#808080" stroke-width="1" />
<text transform="translate(1534,53) scale(1,1.1)" x="0" y="0" fill="#808080" text-anchor="start" font-size="11" font-weight="normal" >100</text>
<line x1="1528" y1="84.5" x2="1532" y2="84.5" stroke="#808080" stroke-width="1" />
<text transform="translate(1534,89) scale(1,1.1)" x="0" y="0" fill="#808080" text-anchor="start" font-size="11" font-weight="normal" >95</text>
<line x1="1528" y1="120.5" x2="1532" y2="120.5" stroke="#808080" stroke-width="1" />
<text transform="translate(1534,125) scale(1,1.1)" x="0" y="0" fill="#808080" text-anchor="start" font-size="11" font-weight="normal" >90</text>
<line x1="1528" y1="156.5" x2="1532" y2="156.5" stroke="#808080" stroke-width="1" />
<text transform="translate(1534,161) scale(1,1.1)" x="0" y="0" fill="#808080" text-anchor="start" font-size="11" font-weight="normal" >85</text>
<line x1="1528" y1="192.5" x2="1532" y2="192.5" stroke="#808080" stroke-width="1" />
<text transform="translate(1534,197) scale(1,1.1)" x="0" y="0" fill="#808080" text-anchor="start" font-size="11" font-weight="normal" >80</text>
<line x1="1528" y1="228.5" x2="1532" y2="228.5" stroke="#808080" stroke-width="1" />
<text transform="translate(1534,233) scale(1,1.1)" x="0" y="0" fill="#808080" text-anchor="start" font-size="11" font-weight="normal" >75</text>
<line x1="1528" y1="264.5" x2="1532" y2="264.5" stroke="#808080" stroke-width="1" />
<text transform="translate(1534,269) scale(1,1.1)" x="0" y="0" fill="#808080" text-anchor="start" font-size="11" font-weight="normal" >70</text>
<line x1="1528" y1="300.5" x2="1532" y2="300.5" stroke="#808080" stroke-width="1" />
<text transform="translate(1534,305) scale(1,1.1)" x="0" y="0" fill="#808080" text-anchor="start" font-size="11" font-weight="normal" >65</text>
<line x1="1528" y1="336.5" x2="1532" y2="336.5" stroke="#808080" stroke-width="1" />
<text transform="translate(1534,341) scale(1,1.1)" x="0" y="0" fill="#808080" text-anchor="start" font-size="11" font-weight="normal" >60</text>
<line x1="1528" y1="372.5" x2="1532" y2="372.5" stroke="#808080" stroke-width="1" />
<text transform="translate(1534,377) scale(1,1.1)" x="0" y="0" fill="#808080" text-anchor="start" font-size="11" font-weight="normal" >55</text>
<line x1="1528" y1="408.5" x2="1532" y2="408.5" stroke="#808080" stroke-width="1" />
<text transform="translate(1534,413) scale(1,1.1)" x="0" y="0" fill="#808080" text-anchor="start" font-size="11" font-weight="normal" >50</text>
<line x1="1528" y1="444.5" x2="1532" y2="444.5" stroke="#808080" stroke-width="1" />
<text transform="translate(1534,449) scale(1,1.1)" x="0" y="0" fill="#808080" text-anchor="start" font-size="11" font-weight="normal" >45</text>
<line x1="1528" y1="480.5" x2="1532" y2="480.5" stroke="#808080" stroke-width="1" />
<text transform="translate(1534,485) scale(1,1.1)" x="0" y="0" fill="#808080" text-anchor="start" font-size="11" font-weight="normal" >40</text>
<line x1="1528" y1="516.5" x2="1532" y2="516.5" stroke="#808080" stroke-width="1" />
<text transform="translate(1534,521) scale(1,1.1)" x="0" y="0" fill="#808080" text-anchor="start" font-size="11" font-weight="normal" >35</text>
<line x1="1528" y1="552.5" x2="1532" y2="552.5" stroke="#808080" stroke-width="1" />
<text transform="translate(1534,557) scale(1,1.1)" x="0" y="0" fill="#808080" text-anchor="start" font-size="11" font-weight="normal" >30</text>
<line x1="1528" y1="588.5" x2="1532" y2="588.5" stroke="#808080" stroke-width="1" />
<text transform="translate(1534,593) scale(1,1.1)" x="0" y="0" fill="#808080" text-anchor="start" font-size="11" font-weight="normal" >25</text>
<line x1="1528" y1="624.5" x2="1532" y2="624.5" stroke="#808080" stroke-width="1" />
<text transform="translate(1534,629) scale(1,1.1)" x="0" y="0" fill="#808080" text-anchor="start" font-size="11" font-weight="normal" >20</text>
<line x1="1528" y1="660.5" x2="1532" y2="660.5" stroke="#808080" stroke-width="1" />
<text transform="translate(1534,665) scale(1,1.1)" x="0" y="0" fill="#808080" text-anchor="start" font-size="11" font-weight="normal" >15</text>
<line x1="1528" y1="696.5" x2="1532" y2="696.5" stroke="#808080" stroke-width="1" />
<text transform="translate(1534,701) scale(1,1.1)" x="0" y="0" fill="#808080" text-anchor="start" font-size="11" font-weight="normal" >10</text>
<line x1="1528" y1="732.5" x2="1532" y2="732.5" stroke="#808080" stroke-width="1" />
<text transform="translate(1534,737) scale(1,1.1)" x="0" y="0" fill="#808080" text-anchor="start" font-size="11" font-weight="normal" >5</text>
<line x1="1528" y1="768.5" x2="1532" y2="768.5" stroke="#808080" stroke-width="1" />
<text transform="translate(1534,773) scale(1,1.1)" x="0" y="0" fill="#808080" text-anchor="start" font-size="11" font-weight="normal" >0</text>
<line x1="1565.5" y1="48" x2="1565.5" y2="768" stroke="#808080" stroke-width="1" />
<text transform="translate(1574,37) scale(1,1.1)" x="0" y="0" fill="#0000ff" text-anchor="middle" font-size="11" font-weight="normal" >l/m²</text>
<line x1="1561" y1="77.5" x2="1569" y2="77.5" stroke="#808080" stroke-width="1" />
<text transform="translate(1572,82) scale(1,1.1)" x="0" y="0" fill="#0000ff" text-anchor="start" font-size="11" font-weight="normal" >4.8</text>
<line x1="1565" y1="106.5" x2="1569" y2="106.5" stroke="#808080" stroke-width="1" />
<text transform="translate(1572,111) scale(1,1.1)" x="0" y="0" fill="#0000ff" text-anchor="start" font-size="11" font-weight="normal" >4.6</text>
<line x1="1565" y1="134.5" x2="1569" y2="134.5" stroke="#808080" stroke-width="1" />
<text transform="translate(1572,139) scale(1,1.1)" x="0" y="0" fill="#0000ff" text-anchor="start" font-size="11" font-weight="normal" >4.4</text>
<line x1="1565" y1="163.5" x2="1569" y2="163.5" stroke="#808080" stroke-width="1" />
<text transform="translate(1572,168) scale(1,1.1)" x="0" y="0" fill="#0000ff" text-anchor="start" font-size="11" font-weight="normal" >4.2</text>
<line x1="1565" y1="192.5" x2="1569" y2="192.5" stroke="#808080" stroke-width="1" />
<text transform="translate(1572,197) scale(1,1.1)" x="0" y="0" fill="#0000ff" text-anchor="start" font-size="11" font-weight="normal" >4.0</text>
<line x1="1565" y1="221.5" x2="1569" y2="221.5" stroke="#808080" stroke-width="1" />
<text transform="translate(1572,226) scale(1,1.1)" x="0" y="0" fill="#0000ff" text-anchor="start" font-size="11" font-weight="normal" >3.8</text>
<line x1="1565" y1="250.5" x2="1569" y2="250.5" stroke="#808080" stroke-width="1" />
<text transform="translate(1572,255) scale(1,1.1)" x="0" y="0" fill="#0000ff" text-anchor="start" font-size="11" font-weight="normal" >3.6</text>
<line x1="1565" y1="278.5" x2="1569" y2="278.5" stroke="#808080" stroke-width="1" />
<text transform="translate(1572,283) scale(1,1.1)" x="0" y="0" fill="#0000ff" text-anchor="start" font-size="11" font-weight="normal" >3.4</text>
<line x1="1565" y1="307.5" x2="1569" y2="307.5" stroke="#808080" stroke-width="1" />
<text transform="translate(1572,312) scale(1,1.1)" x="0" y="0" fill="#0000ff" text-anchor="start" font-size="11" font-weight="normal" >3.2</text>
<line x1="1565" y1="336.5" x2="1569" y2="336.5" stroke="#808080" stroke-width="1" />
<text transform="translate(1572,341) scale(1,1.1)" x="0" y="0" fill="#0000ff" text-anchor="start" font-size="11" font-weight="normal" >3.0</text>
<line x1="1565" y1="365.5" x2="1569" y2="365.5" stroke="#808080" stroke-width="1" />
<text transform="translate(1572,370) scale(1,1.1)" x="0" y="0" fill="#0000ff" text-anchor="start" font-size="11" font-weight="normal" >2.8</text>
<line x1="1565" y1="394.5" x2="1569" y2="394.5" stroke="#808080" stroke-width="1" />
<text transform="translate(1572,399) scale(1,1.1)" x="0" y="0" fill="#0000ff" text-anchor="start" font-size="11" font-weight="normal" >2.6</text>
<line x1="1565" y1="422.5" x2="1569" y2="422.5" stroke="#808080" stroke-width="1" />
<text transform="translate(1572,427) scale(1,1.1)" x="0" y="0" fill="#0000ff" text-anchor="start" font-size="11" font-weight="normal" >2.4</text>
<line x1="1565" y1="451.5" x2="1569" y2="451.5" stroke="#808080" stroke-width="1" />
<text transform="translate(1572,456) scale(1,1.1)" x="0" y="0" fill="#0000ff" text-anchor="start" font-size="11" font-weight="normal" >2.2</text>
<line x1="1565" y1="480.5" x2="1569" y2="480.5" stroke="#808080" stroke-width="1" />
<text transform="translate(1572,485) scale(1,1.1)" x="0" y="0" fill="#0000ff" text-anchor="start" font-size="11" font-weight="normal" >2.0</text>
<line x1="1565" y1="509.5" x2="1569" y2="509.5" stroke="#808080" stroke-width="1" />
<text transform="translate(1572,514) scale(1,1.1)" x="0" y="0" fill="#0000ff" text-anchor="start" font-size="11" font-weight="normal" >1.8</text>
<line x1="1565" y1="538.5" x2="1569" y2="538.5" stroke="#808080" stroke-width="1" />
<text transform="translate(1572,543) scale(1,1.1)" x="0" y="0" fill="#0000ff" text-anchor="start" font-size="11" font-weight="normal" >1.6</text>
<line x1="1565" y1="566.5" x2="1569" y2="566.5" stroke="#808080" stroke-width="1" />
<text transform="translate(1572,571) scale(1,1.1)" x="0" y="0" fill="#0000ff" text-anchor="start" font-size="11" font-weight="normal" >1.4</text>
<line x1="1565" y1="595.5" x2="1569" y2="595.5" stroke="#808080" stroke-width="1" />
<text transform="translate(1572,600) scale(1,1.1)" x="0" y="0" fill="#0000ff" text-anchor="start" font-size="11" font-weight="normal" >1.2</text>
<line x1="1565" y1="624.5" x2="1569" y2="624.5" stroke="#808080" stroke-width="1" />
<text transform="translate(1572,629) scale(1,1.1)" x="0" y="0" fill="#0000ff" text-anchor="start" font-size="11" font-weight="normal" >1.0</text>
<line x1="1565" y1="653.5" x2="1569" y2="653.5" stroke="#808080" stroke-width="1" />
<text transform="translate(1572,658) scale(1,1.1)" x="0" y="0" fill="#0000ff" text-anchor="start" font-size="11" font-weight="normal" >0.8</text>
<line x1="1565" y1="682.5" x2="1569" y2="682.5" stroke="#808080" stroke-width="1" />
<text transform="translate(1572,687) scale(1,1.1)" x="0" y="0" fill="#0000ff" text-anchor="start" font-size="11" font-weight="normal" >0.6</text>
<line x1="1565" y1="710.5" x2="1569" y2="710.5" stroke="#808080" stroke-width="1" />
<text transform="translate(1572,715) scale(1,1.1)" x="0" y="0" fill="#0000ff" text-anchor="start" font-size="11" font-weight="normal" >0.4</text>
<line x1="1565" y1="739.5" x2="1569" y2="739.5" stroke="#808080" stroke-width="1" />
<text transform="translate(1572,744) scale(1,1.1)" x="0" y="0" fill="#0000ff" text-anchor="start" font-size="11" font-weight="normal" >0.2</text>
<line x1="1561" y1="768.5" x2="1569" y2="768.5" stroke="#808080" stroke-width="1" />
<text transform="translate(1572,773) scale(1,1.1)" x="0" y="0" fill="#0000ff" text-anchor="start" font-size="11" font-weight="normal" >0.0</text>
<line x1="1602.5" y1="48" x2="1602.5" y2="768" stroke="#808080" stroke-width="1" />
<text transform="translate(1605,37) scale(1,1.1)" x="0" y="0" fill="#408080" text-anchor="middle" font-size="11" font-weight="normal" >°</text>
<line x1="1598" y1="48.5" x2="1606" y2="48.5" stroke="#808080" stroke-width="1" />
<text transform="translate(1608,53) scale(1,1.1)" x="0" y="0" fill="#408080" text-anchor="start" font-size="11" font-weight="normal" xml:space="preserve">360 N</text>
<line x1="1602" y1="108.5" x2="1606" y2="108.5" stroke="#808080" stroke-width="1" />
<text transform="translate(1608,113) scale(1,1.1)" x="0" y="0" fill="#408080" text-anchor="start" font-size="11" font-weight="normal" xml:space="preserve">330</text>
<line x1="1602" y1="168.5" x2="1606" y2="168.5" stroke="#808080" stroke-width="1" />
<text transform="translate(1608,173) scale(1,1.1)" x="0" y="0" fill="#408080" text-anchor="start" font-size="11" font-weight="normal" xml:space="preserve">300</text>
<line x1="1602" y1="228.5" x2="1606" y2="228.5" stroke="#808080" stroke-width="1" />
<text transform="translate(1608,233) scale(1,1.1)" x="0" y="0" fill="#408080" text-anchor="start" font-size="11" font-weight="normal" xml:space="preserve">270 W</text>
<line x1="1602" y1="288.5" x2="1606" y2="288.5" stroke="#808080" stroke-width="1" />
<text transform="translate(1608,293) scale(1,1.1)" x="0" y="0" fill="#408080" text-anchor="start" font-size="11" font-weight="normal" xml:space="preserve">240</text>
<line x1="1602" y1="348.5" x2="1606" y2="348.5" stroke="#808080" stroke-width="1" />
<text transform="translate(1608,353) scale(1,1.1)" x="0" y="0" fill="#408080" text-anchor="start" font-size="11" font-weight="normal" xml:space="preserve">210</text>
<line x1="1602" y1="408.5" x2="1606" y2="408.5" stroke="#808080" stroke-width="1" />
<text transform="translate(1608,413) scale(1,1.1)" x="0" y="0" fill="#408080" text-anchor="start" font-size="11" font-weight="normal" xml:space="preserve">180 S</text>
<line x1="1602" y1="468.5" x2="1606" y2="468.5" stroke="#808080" stroke-width="1" />
<text transform="translate(1608,473) scale(1,1.1)" x="0" y="0" fill="#408080" text-anchor="start" font-size="11" font-weight="normal" xml:space="preserve">150</text>
<line x1="1602" y1="528.5" x2="1606" y2="528.5" stroke="#808080" stroke-width="1" />
<text transform="translate(1608,533) scale(1,1.1)" x="0" y="0" fill="#408080" text-anchor="start" font-size="11" font-weight="normal" xml:space="preserve">120</text>
<line x1="1602" y1="588.5" x2="1606" y2="588.5" stroke="#808080" stroke-width="1" />
<text transform="translate(1608,593) scale(1,1.1)" x="0" y="0" fill="#408080" text-anchor="start" font-size="11" font-weight="normal" xml:space="preserve">90  O</text>
<line x1="1602" y1="648.5" x2="1606" y2="648.5" stroke="#808080" stroke-width="1" />
<text transform="translate(1608,653) scale(1,1.1)" x="0" y="0" fill="#408080" text-anchor="start" font-size="11" font-weight="normal" xml:space="preserve">60</text>
<line x1="1602" y1="708.5" x2="1606" y2="708.5" stroke="#808080" stroke-width="1" />
<text transform="translate(1608,713) scale(1,1.1)" x="0" y="0" fill="#408080" text-anchor="start" font-size="11" font-weight="normal" xml:space="preserve">30</text>
<line x1="1598" y1="768.5" x2="1606" y2="768.5" stroke="#808080" stroke-width="1" />
<text transform="translate(1608,773) scale(1,1.1)" x="0" y="0" fill="#408080" text-anchor="start" font-size="11" font-weight="normal" xml:space="preserve">0</text>
<text transform="translate(1627,773) scale(1,1.1)" x="0" y="0" fill="#408080" text-anchor="start" font-size="11" font-weight="normal" >N</text>
<line x1="1639.5" y1="48" x2="1639.5" y2="768" stroke="#808080" stroke-width="1" />
<text transform="translate(1650,37) scale(1,1.1)" x="0" y="0" fill="#a00000" text-anchor="middle" font-size="11" font-weight="normal" >UV-I</text>
<line x1="1635" y1="48.5" x2="1643" y2="48.5" stroke="#808080" stroke-width="1" />
<text transform="translate(1645,53) scale(1,1.1)" x="0" y="0" fill="#a00000" text-anchor="start" font-size="11" font-weight="normal" >10.0</text>
<line x1="1639" y1="120.5" x2="1643" y2="120.5" stroke="#808080" stroke-width="1" />
<text transform="translate(1645,125) scale(1,1.1)" x="0" y="0" fill="#a00000" text-anchor="start" font-size="11" font-weight="normal" >9.0</text>
<line x1="1639" y1="192.5" x2="1643" y2="192.5" stroke="#808080" stroke-width="1" />
<text transform="translate(1645,197) scale(1,1.1)" x="0" y="0" fill="#a00000" text-anchor="start" font-size="11" font-weight="normal" >8.0</text>
<line x1="1639" y1="264.5" x2="1643" y2="264.5" stroke="#808080" stroke-width="1" />
<text transform="translate(1645,269) scale(1,1.1)" x="0" y="0" fill="#a00000" text-anchor="start" font-size="11" font-weight="normal" >7.0</text>
<line x1="1639" y1="336.5" x2="1643" y2="336.5" stroke="#808080" stroke-width="1" />
<text transform="translate(1645,341) scale(1,1.1)" x="0" y="0" fill="#a00000" text-anchor="start" font-size="11" font-weight="normal" >6.0</text>
<line x1="1639" y1="408.5" x2="1643" y2="408.5" stroke="#808080" stroke-width="1" />
<text transform="translate(1645,413) scale(1,1.1)" x="0" y="0" fill="#a00000" text-anchor="start" font-size="11" font-weight="normal" >5.0</text>
<line x1="1639" y1="480.5" x2="1643" y2="480.5" stroke="#808080" stroke-width="1" />
<text transform="translate(1645,485) scale(1,1.1)" x="0" y="0" fill="#a00000" text-anchor="start" font-size="11" font-weight="normal" >4.0</text>
<line x1="1639" y1="552.5" x2="1643" y2="552.5" stroke="#808080" stroke-width="1" />
<text transform="translate(1645,557) scale(1,1.1)" x="0" y="0" fill="#a00000" text-anchor="start" font-size="11" font-weight="normal" >3.0</text>
<line x1="1639" y1="624.5" x2="1643" y2="624.5" stroke="#808080" stroke-width="1" />
<text transform="translate(1645,629) scale(1,1.1)" x="0" y="0" fill="#a00000" text-anchor="start" font-size="11" font-weight="normal" >2.0</text>
<line x1="1639" y1="696.5" x2="1643" y2="696.5" stroke="#808080" stroke-width="1" />
<text transform="translate(1645,701) scale(1,1.1)" x="0" y="0" fill="#a00000" text-anchor="start" font-size="11" font-weight="normal" >1.0</text>
<line x1="1635" y1="768.5" x2="1643" y2="768.5" stroke="#808080" stroke-width="1" />
<text transform="translate(1645,773) scale(1,1.1)" x="0" y="0" fill="#a00000" text-anchor="start" font-size="11" font-weight="normal" >0.0</text>
<g clip-path="url(#chartclip)">
<polyline points="191.9,766.5 194.8,716.5 197.0,672.4 198.5,687.1 199.2,728.2 200.7,716.5 201.4,710.6 205.1,710.6 206.6,728.2 208.1,748.8 209.5,719.4 211.0,710.6 212.5,728.2 214.7,710.6 216.9,710.6 219.1,728.2 221.3,710.6 225.7,710.6 227.2,729.7 229.4,729.7 231.6,710.6 233.8,729.7 236.7,710.6 238.9,710.6 240.4,729.7 242.6,710.6 244.1,722.4 246.3,766.5 248.5,766.5 250.7,742.9 252.9,717.9 255.1,710.6 256.6,722.4 258.1,710.6 261.0,710.6 262.5,731.2 264.7,748.8 267.6,748.8 269.9,710.6 272.1,652.5 273.5,710.6 275.0,728.2 277.9,710.6 280.9,684.1 284.6,652.5 286.0,691.5 287.5,672.4 289.0,710.6 290.4,672.4 291.9,710.6 293.4,684.1 294.9,710.6 297.1,728.2 300.0,698.8 302.2,691.5 304.4,710.6 308.8,710.6 311.0,672.4 313.2,710.6 314.7,728.2 317.6,757.6 320.6,710.6 322.1,742.9 325.0,766.5 326.5,728.2 329.4,766.5 331.6,728.2 333.8,766.5 336.8,722.4 339.7,691.5 341.9,710.6 344.1,691.5 348.5,691.5 350.7,672.4 352.9,691.5 355.9,710.6 358.8,691.5 361.8,728.2 364.7,691.5 367.6,728.2 369.1,691.5 372.1,710.6 379.4,710.6 382.4,672.4 385.3,710.6 386.8,728.2 389.7,710.6 394.1,710.6 396.3,672.4 398.5,728.2 401.5,710.6 404.4,728.2 405.9,710.6 408.8,728.2 411.8,710.6 414.7,728.2 416.9,710.6 419.1,728.2 421.3,710.6 424.3,672.4 426.5,710.6 429.4,728.2 432.4,766.5 435.3,742.9 438.2,766.5" fill="none" stroke="#00ff40" stroke-width="1" stroke-linejoin="miter" stroke-miterlimit="2" shape-rendering="crispEdges" />
<polyline points="430.0,740.8 433.1,766.4 436.2,748.5 438.5,766.4 443.2,766.4 445.5,729.9 447.8,766.4 463.3,766.4 465.7,748.5 468.0,766.4 470.3,748.5 474.2,748.5 478.8,710.5 484.3,710.5 486.6,748.5 490.5,729.9 492.0,766.4 495.1,748.5 499.0,748.5 500.5,766.4 504.4,766.4 506.7,729.9 508.3,766.4 512.2,748.5 514.5,748.5 516.8,766.4 521.5,748.5 523.0,766.4 529.2,748.5 530.8,766.4 568.0,766.4 570.3,748.5 572.6,766.4 577.3,766.4 578.8,748.5 580.4,766.4 582.7,766.4 584.3,748.5 586.6,766.4 595.1,766.4 597.4,748.5 599.0,766.4" fill="none" stroke="#00ff40" stroke-width="1" stroke-linejoin="miter" stroke-miterlimit="2" shape-rendering="crispEdges" />
<polyline points="568.1,767.0 570.6,748.9 572.4,767.0 577.4,767.0 579.3,748.9 581.1,767.0 583.6,767.0 584.9,748.9 586.7,767.0 596.1,767.0 597.6,748.9 599.6,767.0 702.4,767.0 704.3,730.3 706.2,747.1 707.4,730.3 709.3,747.1 711.1,732.1 713.0,709.8 714.9,747.1 716.7,732.1 719.2,749.6 723.0,749.6 724.2,729.7 726.7,672.4 727.9,697.3 729.2,682.4 731.0,709.8 732.9,691.1 735.4,712.2 736.6,660.0" fill="none" stroke="#00ff40" stroke-width="1" stroke-linejoin="miter" stroke-miterlimit="2" shape-rendering="crispEdges" />
<polyline points="1074.1,701.8 1077.1,691.5 1079.3,728.2 1081.5,701.8 1082.9,652.5 1084.4,728.2 1085.9,710.6 1088.1,710.6 1091.8,710.6 1092.5,750.3 1094.7,710.6 1097.6,728.2 1100.6,742.9 1103.5,766.5 1105.7,751.8 1107.2,766.5 1109.4,751.8 1111.6,729.7 1113.1,766.5 1114.6,742.9 1116.8,766.5 1118.2,748.8 1119.7,766.5 1121.2,766.8" fill="none" stroke="#00ff40" stroke-width="1" stroke-linejoin="miter" stroke-miterlimit="2" shape-rendering="crispEdges" />
<polyline points="1186.0,767.3 1187.3,767.0 1189.8,749.0 1191.6,767.0 1204.7,767.0 1206.6,749.0 1208.5,767.0 1210.3,749.0 1212.2,749.0 1214.1,767.0 1217.8,767.0 1219.7,749.0 1221.5,767.0 1241.4,767.0 1243.3,749.0 1245.2,767.0 1247.7,745.9 1248.9,732.2 1250.1,745.9 1252.6,749.0 1253.9,711.0 1254.5,672.4 1255.1,749.0 1256.4,729.7 1257.6,684.9 1260.1,672.4 1261.3,682.4 1262.6,729.7 1263.2,701.1 1264.5,729.7 1271.9,729.7 1274.4,767.0 1278.1,767.0 1280.6,749.0 1282.5,767.0 1286.9,767.0 1288.7,749.0 1290.6,767.0 1292.5,749.0 1294.3,767.0 1332.9,767.0 1334.2,739.7 1334.8,709.8 1336.0,767.0 1336.6,754.6 1337.9,767.0" fill="none" stroke="#00ff40" stroke-width="1" stroke-linejoin="miter" stroke-miterlimit="2" shape-rendering="crispEdges" />
<polyline points="1332.5,767.0 1334.6,709.8 1335.6,767.0 1374.2,767.0 1375.4,749.0 1377.3,767.0 1392.9,767.0 1394.5,749.0 1396.0,767.0 1411.5,767.0 1413.4,749.0 1417.7,749.0 1419.6,767.0 1422.3,709.8 1424.6,726.0 1425.8,767.0 1432.1,767.0 1433.5,749.0 1435.2,767.0 1445.1,767.0 1446.6,749.0 1448.2,767.0" fill="none" stroke="#00ff40" stroke-width="1" stroke-linejoin="miter" stroke-miterlimit="2" shape-rendering="crispEdges" />
<polyline points="720.0,750.0 721.8,691.9 723.6,702.5 725.4,725.1 727.1,681.1 729.5,726.2 731.3,736.4 733.1,681.1 734.9,636.0 736.6,633.6 739.0,726.2 741.4,655.0 743.8,628.5 746.1,593.2 747.9,596.2 749.7,595.6 751.5,648.4 753.2,655.0 755.6,664.8 758.0,595.6 759.8,584.9 761.6,688.2 763.4,595.7 765.1,617.0 766.9,677.8 768.7,659.7 770.5,631.1 772.2,607.5 774.0,682.5 775.8,678.7 777.6,627.8 779.4,652.6 781.1,661.7 782.9,669.2 784.7,668.3 786.5,600.4 788.9,575.4 791.2,605.1 793.6,575.0 796.0,575.4 798.4,659.7 800.1,687.0 801.9,579.0 803.7,680.8 805.5,659.7 807.3,608.9 809.1,631.2 810.9,609.0 812.6,681.1 814.4,661.3 816.2,621.7 818.0,693.2 819.7,664.5 821.5,630.0 823.3,612.2 825.1,613.1 826.9,671.6 828.6,618.4 830.4,579.0 832.2,575.0 834.0,633.6 836.4,607.1 838.7,614.6 841.1,635.6 843.5,659.7 845.9,632.1 848.2,595.6 850.0,592.9 851.8,631.2 853.6,592.7 855.4,595.6 857.1,597.8 858.9,659.7 860.7,640.5 862.5,619.4 864.9,581.4 867.2,576.6 869.6,643.1 872.0,602.7 874.4,579.0 876.7,579.0 879.1,631.2 882.7,591.2 886.2,614.6 888.6,677.6 891.0,659.7 893.4,657.6 895.7,636.0" fill="none" stroke="#00ff40" stroke-width="1" stroke-linejoin="miter" stroke-miterlimit="2" shape-rendering="crispEdges" />
<polyline points="890.0,631.2 891.8,690.8 893.6,659.7 896.5,688.2 899.5,595.6 901.9,577.4 904.2,655.0 906.0,575.0 907.8,576.6 909.6,681.1 911.4,671.6 913.7,593.2 915.5,657.8 917.3,655.0 919.1,645.1 920.9,579.0 922.6,588.6 924.4,631.2 926.2,628.5 928.0,595.6 929.8,628.6 931.6,631.2 933.4,626.2 935.1,595.6 936.9,587.6 938.7,643.1 940.5,637.2 942.2,631.2 944.0,596.0 945.8,575.4 947.6,642.7 949.4,643.1 951.1,677.7 952.9,631.2 955.3,662.1 957.1,690.6 958.9,593.2 961.2,621.5 963.6,631.2 965.4,611.8 967.2,593.2 969.0,602.8 970.7,662.1 973.1,575.0 975.5,560.0 977.9,575.0 980.2,614.6 982.0,636.3 983.8,655.0 985.6,608.6 987.4,595.6 989.1,611.5 990.9,643.1 993.9,664.3 996.9,575.4 999.2,618.8 1001.6,645.5 1004.0,632.2 1006.4,595.6 1008.8,593.2 1011.1,631.2 1012.9,575.0 1014.7,595.6 1017.0,613.3 1019.4,666.9 1022.4,602.9 1025.4,612.2 1027.8,642.0 1030.1,659.7 1032.5,694.5 1034.9,595.6 1037.2,671.6 1039.6,684.0 1042.0,662.1 1044.3,609.1 1046.7,614.6 1049.1,689.9 1051.5,666.9 1053.9,614.6 1056.2,684.7 1058.6,674.0 1061.0,650.2 1063.3,707.7 1065.7,702.5 1067.8,729.0 1070.0,671.6" fill="none" stroke="#00ff40" stroke-width="1" stroke-linejoin="miter" stroke-miterlimit="2" shape-rendering="crispEdges" />
<polyline points="745.0,641.8 748.2,667.3 751.4,633.8 754.6,659.2 757.8,625.7 761.0,670.1 764.2,619.5 767.4,649.0 770.6,614.0 773.8,661.7 777.0,606.6 780.2,651.0 783.4,598.9 786.6,634.0 789.8,591.5 793.0,645.2 796.2,584.5 799.4,618.0 802.6,577.5 805.8,624.7 809.0,571.8 812.2,602.3 815.4,566.1 818.6,593.8 821.8,561.2 825.0,597.7 828.2,556.7 831.4,607.1 834.6,552.9 837.8,582.8 841.0,550.8 844.2,584.1 847.4,548.6 850.6,595.3 853.8,545.0 857.0,602.7 860.2,539.2 863.4,586.3 866.6,533.5 869.8,575.7 873.0,529.0 876.2,591.7 879.4,524.4 882.6,553.0 885.8,522.2 889.0,579.1 892.2,521.0 895.4,561.3 898.6,517.7 901.8,556.1 905.0,513.8 908.2,554.3 911.4,511.7 914.6,558.6 917.8,509.6 921.0,574.9 924.2,506.8 927.4,545.5 930.6,503.6 933.8,549.9 937.0,500.4 940.2,537.8 943.4,498.4 946.6,527.3 949.8,502.7 953.0,529.2 956.2,499.4 959.4,519.9 962.6,497.3 965.8,522.3 969.0,496.7 972.2,530.5 975.4,496.0 978.6,554.0 981.8,495.4 985.0,544.8 988.2,496.0 991.4,539.9 994.6,498.2 997.8,550.1 1001.0,497.2 1004.2,544.3 1007.4,496.2 1010.6,536.0 1013.8,495.2 1017.0,542.2 1020.2,494.3 1023.4,530.1 1026.6,495.5 1029.8,523.6 1033.0,499.6 1036.2,536.6 1039.4,502.5 1042.6,536.0 1045.8,505.2 1049.0,544.9 1052.2,507.8 1055.4,541.9" fill="none" stroke="#ff8080" stroke-width="1" stroke-linejoin="miter" stroke-miterlimit="2" shape-rendering="crispEdges" />
<rect x="728" y="719" width="313.5" height="49" fill="#d8d800"/>
<rect x="650" y="720" width="3" height="48" fill="#d8d000"/>
<rect x="1101" y="719" width="8" height="49" fill="#d8d800"/>
<polyline points="724.7,768.0 729.5,725.0 801.9,725.0 803.0,710.1 867.2,710.1 868.0,703.2 883.9,703.2 885.0,710.1 944.6,710.1 945.8,718.0 985.0,718.0 987.4,725.0 1010.0,725.0 1012.3,732.2 1040.8,732.2 1042.0,768.0" fill="none" stroke="#a00000" stroke-width="1" stroke-linejoin="miter" stroke-miterlimit="2" shape-rendering="crispEdges" />
<polyline points="629.2,766.4 631.6,761.7 637.8,759.4 647.0,754.7 662.6,743.1 675.0,737.7 678.0,732.2 680.0,732.2 692.2,727.6 713.6,718.5 721.2,710.8 722.8,695.5 725.8,695.5 727.4,668.0 730.4,637.5 735.0,591.7 738.0,570.3 741.1,565.7 742.6,591.7 744.2,585.5 747.2,545.8 751.8,530.6 761.2,504.7 768.0,488.4 772.0,474.8 776.2,466.7 778.9,453.0 783.0,434.0 784.3,409.6 787.0,398.8 793.8,385.2 800.6,370.2 803.3,367.5 810.1,373.0 815.5,371.6 818.3,367.5 822.3,368.3 830.5,355.3 837.3,352.6 845.4,345.8 856.3,339.6 864.4,336.8 867.2,335.0 878.0,333.6 888.1,333.6 903.0,336.8 915.3,345.0 923.4,349.9 931.6,358.0 939.7,367.5 950.6,379.7 958.7,390.6 966.8,406.8 975.0,420.4 985.8,439.4 991.3,453.0 999.4,472.0 1004.8,488.3 1010.3,504.5 1018.4,529.0 1026.5,560.0 1039.6,640.0 1040.0,695.9 1041.8,709.1 1052.1,712.1 1056.5,706.2 1060.9,717.9 1065.3,692.9 1068.2,715.0 1071.9,703.2 1074.1,723.8 1081.5,729.7 1091.8,737.1 1103.5,745.9 1112.4,753.2 1124.1,760.6 1128.5,766.5" fill="none" stroke="#e0e040" stroke-width="2" stroke-linejoin="miter" stroke-miterlimit="2" shape-rendering="crispEdges" />
<polyline points="189.0,722.7 195.0,726.5 199.4,731.0 223.3,733.2 245.6,733.2 253.1,736.2 260.5,736.9 268.0,738.4 275.4,732.4 290.4,729.4 302.3,729.4 317.2,732.4 326.1,736.9 329.1,733.9 356.0,733.9 364.9,730.9 379.8,733.9 394.7,738.4 406.6,738.4 409.6,735.4 418.6,739.9 436.0,744.4 437.8,745.4 447.0,747.0 453.3,752.4 464.1,754.7 473.4,754.7 479.6,748.5 492.0,752.4 504.4,753.2 521.5,754.0 529.2,759.4 541.6,763.3 554.0,765.6 560.0,767.2 570.0,766.4 572.4,765.1 576.2,765.7 597.3,765.1 611.0,765.7 612.2,767.0 688.1,767.2 690.0,759.5 694.3,758.9 696.8,755.8 700.0,751.8 702.5,748.2 705.0,743.1 707.5,741.9 710.0,736.7 712.5,734.6 715.0,735.0 717.5,730.2 720.0,726.9 722.5,723.9 725.0,722.9 727.5,720.4 730.0,717.9 732.5,713.8 735.0,711.2 737.5,708.6 740.0,707.5 742.5,702.1 745.0,700.5 747.5,701.0 750.0,698.5 752.5,699.0 755.0,696.4 757.5,696.8 760.0,697.0 762.5,695.8 765.0,694.5 767.5,693.3 770.0,691.8 772.5,688.9 775.0,687.4 777.5,684.5 780.0,683.0 782.5,683.5 785.0,685.0 787.5,683.5 790.0,683.5 792.5,684.2 795.0,681.2 797.5,681.2 800.0,679.7 802.5,676.8 805.0,677.9 807.5,676.4 810.0,676.4 812.5,674.9 815.0,676.4 817.5,676.1 820.0,675.9 822.5,674.1 825.0,675.4 827.5,675.1 830.0,674.9 832.5,673.1 835.0,672.9 837.5,675.6 840.0,675.2 842.5,671.7 845.0,672.7 847.5,670.7 850.0,673.2 852.5,671.2 855.0,669.2 857.5,670.2 860.0,671.2 862.5,670.7 865.0,667.7 867.5,667.7 870.0,667.7 872.5,670.7 875.0,669.0 877.5,668.0 880.0,667.0 882.5,664.5 885.0,665.0 887.5,663.2 890.0,663.7 892.5,664.1 895.0,664.5 897.5,666.5 900.0,668.4 902.5,665.5 905.0,664.8 907.5,664.0 910.0,661.7 912.5,662.5 915.0,662.5 917.5,663.2 920.0,664.0 922.5,666.3 925.0,667.0 927.5,666.2 930.0,665.0 932.5,660.7 935.0,661.0 937.5,661.2 940.0,660.2 942.5,660.7 945.0,662.7 947.5,661.7 950.0,662.0 952.5,661.5 955.0,659.5 957.5,662.0 960.0,659.9 962.5,658.7 965.0,662.7 967.5,662.2 970.0,661.7 972.5,664.3 975.0,665.6 977.5,663.6 980.0,663.1 982.5,662.6 985.0,663.6 987.5,660.1 990.0,659.6 992.5,659.1 995.0,660.1 997.5,659.8 1000.0,661.8 1002.5,660.8 1005.0,661.3 1007.5,661.9 1010.0,661.7 1012.5,661.0 1015.0,660.2 1017.5,659.5 1020.0,658.8 1022.5,658.7 1025.0,660.3 1027.5,657.4 1030.0,657.5 1032.5,662.5 1035.0,665.9 1037.5,666.7 1040.0,665.8 1042.5,665.2 1045.0,664.7 1047.5,664.2 1050.0,665.1 1052.5,662.5 1055.0,663.1 1057.5,665.2 1060.0,665.4 1062.5,664.1 1065.0,665.8 1067.5,665.9 1070.0,666.0 1072.5,669.1 1075.0,669.9 1077.5,671.0 1080.0,669.0 1082.5,668.8 1085.0,667.5 1087.5,667.8 1090.0,669.8 1092.5,670.6 1095.0,671.3 1097.5,672.1 1100.0,672.9 1102.5,670.8 1105.0,676.0 1107.5,679.4 1110.0,684.0 1112.5,685.5 1115.0,686.8 1117.5,687.7 1120.0,685.9 1122.5,689.9 1125.0,690.6 1127.5,693.8 1130.0,695.5 1132.5,694.1 1135.0,697.8 1137.5,696.8 1140.0,697.3 1142.5,697.3 1145.0,701.9 1147.5,702.3 1150.0,701.3 1152.5,700.1 1155.0,701.5 1157.5,698.5 1160.0,696.9 1162.5,696.4 1165.0,695.3 1167.5,697.4 1170.0,697.4 1172.5,700.4 1175.0,700.9 1177.5,703.1 1180.0,706.7 1182.5,708.2 1185.0,705.2 1187.5,705.2 1190.0,708.3 1192.5,706.5 1195.0,709.3 1197.5,710.5 1200.0,711.4 1202.5,707.8 1205.0,710.7 1207.5,708.8 1210.0,709.9 1212.5,712.5 1215.0,713.3 1217.5,711.4 1220.0,711.3 1222.5,708.3 1225.0,709.8 1227.5,709.8 1230.0,710.9 1232.5,711.2 1235.0,713.0 1237.5,716.3 1240.0,718.3 1242.5,720.2 1245.0,722.1 1247.5,722.6 1250.0,725.4 1252.5,724.1 1255.0,719.9 1257.5,717.7 1260.0,713.1 1262.5,708.5 1265.0,705.8 1267.5,700.3 1270.0,700.7 1272.5,697.6 1275.0,697.4 1277.5,698.6 1280.0,701.7 1282.5,702.7 1285.0,705.2 1287.5,707.7 1290.0,709.0 1292.5,710.1 1295.0,706.0 1297.5,706.9 1300.0,710.7 1302.5,710.0 1305.0,710.8 1307.5,712.8 1310.0,713.6 1312.5,716.9 1315.0,719.3 1317.5,720.1 1320.0,719.5 1322.5,722.1 1325.0,725.1 1327.5,728.0 1330.0,724.7 1332.5,727.2 1335.0,725.1 1337.5,727.6 1340.0,727.2 1342.5,731.2 1345.0,728.0 1347.5,729.2 1350.0,726.3 1352.5,725.5 1355.0,730.7 1357.5,733.7 1360.0,733.7 1362.5,737.5 1365.0,733.6 1367.5,735.6 1370.0,738.6 1372.5,738.8 1375.0,742.1 1377.5,743.9 1380.0,745.3 1382.5,740.2 1385.0,739.7 1387.5,740.4 1390.0,741.0 1392.5,740.4 1395.0,746.1 1397.5,744.9 1400.0,746.6 1402.5,745.2 1405.0,743.3 1407.5,745.5 1410.0,742.1 1412.5,739.8 1415.0,737.2 1417.5,741.8 1420.0,738.8 1422.5,741.8 1425.0,736.6 1427.5,735.3 1430.0,733.8 1432.5,733.8 1435.0,736.8 1437.5,737.4 1440.0,737.3 1442.5,737.8 1445.0,737.0 1447.5,739.0 1450.0,740.0 1452.5,744.1 1455.0,743.5 1457.5,742.8 1460.0,745.0 1462.5,744.2 1465.0,746.2 1467.5,748.7 1470.0,753.4 1472.5,750.9 1475.0,750.6 1477.5,750.7 1480.0,752.5 1482.5,756.5 1485.0,754.2 1487.5,754.8 1490.0,756.3 1492.5,759.2 1495.0,760.1 1497.5,759.9 1500.0,763.4 1503.0,765.8 1505.5,764.5 1509.2,766.4 1514.2,766.8 1526.6,767.0" fill="none" stroke="#00ffff" stroke-width="1" stroke-linejoin="miter" stroke-miterlimit="2" shape-rendering="crispEdges" />
<rect x="193" y="438" width="2" height="2" fill="#408080"/>
<rect x="198" y="438" width="2" height="2" fill="#408080"/>
<rect x="195" y="454" width="2" height="2" fill="#408080"/>
<rect x="200" y="468" width="2" height="2" fill="#408080"/>
<rect x="202" y="462" width="2" height="2" fill="#408080"/>
<rect x="204" y="464" width="2" height="2" fill="#408080"/>
<rect x="206" y="463" width="2" height="2" fill="#408080"/>
<rect x="209" y="459" width="2" height="2" fill="#408080"/>
<rect x="211" y="456" width="2" height="2" fill="#408080"/>
<rect x="213" y="462" width="2" height="2" fill="#408080"/>
<rect x="215" y="462" width="2" height="2" fill="#408080"/>
<rect x="217" y="465" width="2" height="2" fill="#408080"/>
<rect x="219" y="479" width="2" height="2" fill="#408080"/>
<rect x="221" y="485" width="2" height="2" fill="#408080"/>
<rect x="224" y="480" width="2" height="2" fill="#408080"/>
<rect x="226" y="481" width="2" height="2" fill="#408080"/>
<rect x="229" y="482" width="2" height="2" fill="#408080"/>
<rect x="233" y="482" width="2" height="2" fill="#408080"/>
<rect x="235" y="474" width="2" height="2" fill="#408080"/>
<rect x="239" y="471" width="2" height="2" fill="#408080"/>
<rect x="241" y="469" width="2" height="2" fill="#408080"/>
<rect x="244" y="470" width="2" height="2" fill="#408080"/>
<rect x="250" y="471" width="2" height="2" fill="#408080"/>
<rect x="252" y="473" width="2" height="2" fill="#408080"/>
<rect x="255" y="476" width="2" height="2" fill="#408080"/>
<rect x="258" y="477" width="2" height="2" fill="#408080"/>
<rect x="260" y="462" width="2" height="2" fill="#408080"/>
<rect x="261" y="459" width="2" height="2" fill="#408080"/>
<rect x="263" y="453" width="2" height="2" fill="#408080"/>
<rect x="265" y="449" width="2" height="2" fill="#408080"/>
<rect x="267" y="446" width="2" height="2" fill="#408080"/>
<rect x="269" y="445" width="2" height="2" fill="#408080"/>
<rect x="271" y="453" width="2" height="2" fill="#408080"/>
<rect x="273" y="463" width="2" height="2" fill="#408080"/>
<rect x="274" y="450" width="2" height="2" fill="#408080"/>
<rect x="276" y="449" width="2" height="2" fill="#408080"/>
<rect x="278" y="445" width="2" height="2" fill="#408080"/>
<rect x="280" y="473" width="2" height="2" fill="#408080"/>
<rect x="282" y="471" width="2" height="2" fill="#408080"/>
<rect x="284" y="463" width="2" height="2" fill="#408080"/>
<rect x="286" y="464" width="2" height="2" fill="#408080"/>
<rect x="286" y="458" width="2" height="2" fill="#408080"/>
<rect x="289" y="456" width="2" height="2" fill="#408080"/>
<rect x="291" y="436" width="2" height="2" fill="#408080"/>
<rect x="295" y="439" width="2" height="2" fill="#408080"/>
<rect x="297" y="444" width="2" height="2" fill="#408080"/>
<rect x="299" y="453" width="2" height="2" fill="#408080"/>
<rect x="301" y="462" width="2" height="2" fill="#408080"/>
<rect x="304" y="455" width="2" height="2" fill="#408080"/>
<rect x="306" y="471" width="2" height="2" fill="#408080"/>
<rect x="309" y="455" width="2" height="2" fill="#408080"/>
<rect x="310" y="457" width="2" height="2" fill="#408080"/>
<rect x="313" y="451" width="2" height="2" fill="#408080"/>
<rect x="314" y="450" width="2" height="2" fill="#408080"/>
<rect x="320" y="457" width="2" height="2" fill="#408080"/>
<rect x="321" y="460" width="2" height="2" fill="#408080"/>
<rect x="323" y="465" width="2" height="2" fill="#408080"/>
<rect x="327" y="469" width="2" height="2" fill="#408080"/>
<rect x="330" y="471" width="2" height="2" fill="#408080"/>
<rect x="334" y="436" width="2" height="2" fill="#408080"/>
<rect x="336" y="457" width="2" height="2" fill="#408080"/>
<rect x="339" y="446" width="2" height="2" fill="#408080"/>
<rect x="341" y="452" width="2" height="2" fill="#408080"/>
<rect x="343" y="443" width="2" height="2" fill="#408080"/>
<rect x="345" y="457" width="2" height="2" fill="#408080"/>
<rect x="347" y="447" width="2" height="2" fill="#408080"/>
<rect x="349" y="451" width="2" height="2" fill="#408080"/>
<rect x="351" y="474" width="2" height="2" fill="#408080"/>
<rect x="353" y="458" width="2" height="2" fill="#408080"/>
<rect x="356" y="451" width="2" height="2" fill="#408080"/>
<rect x="358" y="459" width="2" height="2" fill="#408080"/>
<rect x="360" y="448" width="2" height="2" fill="#408080"/>
<rect x="362" y="470" width="2" height="2" fill="#408080"/>
<rect x="364" y="479" width="2" height="2" fill="#408080"/>
<rect x="365" y="449" width="2" height="2" fill="#408080"/>
<rect x="368" y="454" width="2" height="2" fill="#408080"/>
<rect x="369" y="448" width="2" height="2" fill="#408080"/>
<rect x="371" y="447" width="2" height="2" fill="#408080"/>
<rect x="373" y="479" width="2" height="2" fill="#408080"/>
<rect x="375" y="458" width="2" height="2" fill="#408080"/>
<rect x="377" y="471" width="2" height="2" fill="#408080"/>
<rect x="379" y="469" width="2" height="2" fill="#408080"/>
<rect x="381" y="458" width="2" height="2" fill="#408080"/>
<rect x="384" y="452" width="2" height="2" fill="#408080"/>
<rect x="386" y="450" width="2" height="2" fill="#408080"/>
<rect x="389" y="450" width="2" height="2" fill="#408080"/>
<rect x="392" y="443" width="2" height="2" fill="#408080"/>
<rect x="394" y="445" width="2" height="2" fill="#408080"/>
<rect x="397" y="449" width="2" height="2" fill="#408080"/>
<rect x="399" y="455" width="2" height="2" fill="#408080"/>
<rect x="401" y="458" width="2" height="2" fill="#408080"/>
<rect x="403" y="468" width="2" height="2" fill="#408080"/>
<rect x="406" y="472" width="2" height="2" fill="#408080"/>
<rect x="407" y="474" width="2" height="2" fill="#408080"/>
<rect x="411" y="466" width="2" height="2" fill="#408080"/>
<rect x="413" y="463" width="2" height="2" fill="#408080"/>
<rect x="416" y="460" width="2" height="2" fill="#408080"/>
<rect x="419" y="468" width="2" height="2" fill="#408080"/>
<rect x="421" y="470" width="2" height="2" fill="#408080"/>
<rect x="423" y="460" width="2" height="2" fill="#408080"/>
<rect x="425" y="450" width="2" height="2" fill="#408080"/>
<rect x="427" y="475" width="2" height="2" fill="#408080"/>
<rect x="429" y="480" width="2" height="2" fill="#408080"/>
<rect x="434" y="497" width="2" height="2" fill="#408080"/>
<rect x="435" y="498" width="2" height="2" fill="#408080"/>
<rect x="440" y="506" width="2" height="2" fill="#408080"/>
<rect x="444" y="509" width="2" height="2" fill="#408080"/>
<rect x="470" y="503" width="2" height="2" fill="#408080"/>
<rect x="474" y="486" width="2" height="2" fill="#408080"/>
<rect x="475" y="480" width="2" height="2" fill="#408080"/>
<rect x="477" y="474" width="2" height="2" fill="#408080"/>
<rect x="479" y="473" width="2" height="2" fill="#408080"/>
<rect x="481" y="471" width="2" height="2" fill="#408080"/>
<rect x="484" y="474" width="2" height="2" fill="#408080"/>
<rect x="485" y="475" width="2" height="2" fill="#408080"/>
<rect x="489" y="480" width="2" height="2" fill="#408080"/>
<rect x="496" y="483" width="2" height="2" fill="#408080"/>
<rect x="498" y="478" width="2" height="2" fill="#408080"/>
<rect x="505" y="474" width="2" height="2" fill="#408080"/>
<rect x="528" y="473" width="2" height="2" fill="#408080"/>
<rect x="583" y="479" width="2" height="2" fill="#408080"/>
<rect x="596" y="474" width="2" height="2" fill="#408080"/>
<rect x="703" y="447" width="2" height="2" fill="#408080"/>
<rect x="706" y="448" width="2" height="2" fill="#408080"/>
<rect x="710" y="450" width="2" height="2" fill="#408080"/>
<rect x="713" y="448" width="2" height="2" fill="#408080"/>
<rect x="716" y="448" width="2" height="2" fill="#408080"/>
<rect x="719" y="443" width="2" height="2" fill="#408080"/>
<rect x="721" y="444" width="2" height="2" fill="#408080"/>
<rect x="723" y="432" width="2" height="2" fill="#408080"/>
<rect x="725" y="435" width="2" height="2" fill="#408080"/>
<rect x="729" y="436" width="2" height="2" fill="#408080"/>
<rect x="731" y="439" width="2" height="2" fill="#408080"/>
<rect x="734" y="441" width="2" height="2" fill="#408080"/>
<rect x="736" y="447" width="2" height="2" fill="#408080"/>
<rect x="738" y="428" width="2" height="2" fill="#408080"/>
<rect x="741" y="439" width="2" height="2" fill="#408080"/>
<rect x="743" y="436" width="2" height="2" fill="#408080"/>
<rect x="745" y="455" width="2" height="2" fill="#408080"/>
<rect x="747" y="472" width="2" height="2" fill="#408080"/>
<rect x="749" y="457" width="2" height="2" fill="#408080"/>
<rect x="751" y="454" width="2" height="2" fill="#408080"/>
<rect x="753" y="453" width="2" height="2" fill="#408080"/>
<rect x="757" y="452" width="2" height="2" fill="#408080"/>
<rect x="758" y="425" width="2" height="2" fill="#408080"/>
<rect x="760" y="457" width="2" height="2" fill="#408080"/>
<rect x="762" y="437" width="2" height="2" fill="#408080"/>
<rect x="764" y="467" width="2" height="2" fill="#408080"/>
<rect x="766" y="453" width="2" height="2" fill="#408080"/>
<rect x="770" y="460" width="2" height="2" fill="#408080"/>
<rect x="771" y="437" width="2" height="2" fill="#408080"/>
<rect x="773" y="447" width="2" height="2" fill="#408080"/>
<rect x="777" y="457" width="2" height="2" fill="#408080"/>
<rect x="779" y="445" width="2" height="2" fill="#408080"/>
<rect x="781" y="455" width="2" height="2" fill="#408080"/>
<rect x="783" y="473" width="2" height="2" fill="#408080"/>
<rect x="784" y="459" width="2" height="2" fill="#408080"/>
<rect x="787" y="492" width="2" height="2" fill="#408080"/>
<rect x="790" y="463" width="2" height="2" fill="#408080"/>
<rect x="793" y="466" width="2" height="2" fill="#408080"/>
<rect x="794" y="461" width="2" height="2" fill="#408080"/>
<rect x="797" y="463" width="2" height="2" fill="#408080"/>
<rect x="799" y="472" width="2" height="2" fill="#408080"/>
<rect x="801" y="480" width="2" height="2" fill="#408080"/>
<rect x="802" y="460" width="2" height="2" fill="#408080"/>
<rect x="805" y="447" width="2" height="2" fill="#408080"/>
<rect x="807" y="441" width="2" height="2" fill="#408080"/>
<rect x="809" y="466" width="2" height="2" fill="#408080"/>
<rect x="810" y="470" width="2" height="2" fill="#408080"/>
<rect x="812" y="461" width="2" height="2" fill="#408080"/>
<rect x="814" y="469" width="2" height="2" fill="#408080"/>
<rect x="816" y="434" width="2" height="2" fill="#408080"/>
<rect x="818" y="452" width="2" height="2" fill="#408080"/>
<rect x="820" y="444" width="2" height="2" fill="#408080"/>
<rect x="822" y="448" width="2" height="2" fill="#408080"/>
<rect x="824" y="444" width="2" height="2" fill="#408080"/>
<rect x="827" y="459" width="2" height="2" fill="#408080"/>
<rect x="829" y="463" width="2" height="2" fill="#408080"/>
<rect x="831" y="432" width="2" height="2" fill="#408080"/>
<rect x="832" y="445" width="2" height="2" fill="#408080"/>
<rect x="835" y="420" width="2" height="2" fill="#408080"/>
<rect x="837" y="423" width="2" height="2" fill="#408080"/>
<rect x="839" y="397" width="2" height="2" fill="#408080"/>
<rect x="844" y="398" width="2" height="2" fill="#408080"/>
<rect x="842" y="439" width="2" height="2" fill="#408080"/>
<rect x="846" y="426" width="2" height="2" fill="#408080"/>
<rect x="848" y="426" width="2" height="2" fill="#408080"/>
<rect x="850" y="439" width="2" height="2" fill="#408080"/>
<rect x="851" y="456" width="2" height="2" fill="#408080"/>
<rect x="853" y="467" width="2" height="2" fill="#408080"/>
<rect x="855" y="457" width="2" height="2" fill="#408080"/>
<rect x="857" y="467" width="2" height="2" fill="#408080"/>
<rect x="859" y="475" width="2" height="2" fill="#408080"/>
<rect x="861" y="477" width="2" height="2" fill="#408080"/>
<rect x="863" y="435" width="2" height="2" fill="#408080"/>
<rect x="864" y="459" width="2" height="2" fill="#408080"/>
<rect x="866" y="439" width="2" height="2" fill="#408080"/>
<rect x="868" y="472" width="2" height="2" fill="#408080"/>
<rect x="873" y="468" width="2" height="2" fill="#408080"/>
<rect x="873" y="450" width="2" height="2" fill="#408080"/>
<rect x="877" y="480" width="2" height="2" fill="#408080"/>
<rect x="877" y="457" width="2" height="2" fill="#408080"/>
<rect x="879" y="459" width="2" height="2" fill="#408080"/>
<rect x="881" y="447" width="2" height="2" fill="#408080"/>
<rect x="883" y="458" width="2" height="2" fill="#408080"/>
<rect x="885" y="463" width="2" height="2" fill="#408080"/>
<rect x="887" y="423" width="2" height="2" fill="#408080"/>
<rect x="889" y="469" width="2" height="2" fill="#408080"/>
<rect x="891" y="455" width="2" height="2" fill="#408080"/>
<rect x="893" y="462" width="2" height="2" fill="#408080"/>
<rect x="894" y="429" width="2" height="2" fill="#408080"/>
<rect x="896" y="471" width="2" height="2" fill="#408080"/>
<rect x="898" y="453" width="2" height="2" fill="#408080"/>
<rect x="900" y="466" width="2" height="2" fill="#408080"/>
<rect x="902" y="434" width="2" height="2" fill="#408080"/>
<rect x="904" y="446" width="2" height="2" fill="#408080"/>
<rect x="905" y="465" width="2" height="2" fill="#408080"/>
<rect x="907" y="475" width="2" height="2" fill="#408080"/>
<rect x="909" y="445" width="2" height="2" fill="#408080"/>
<rect x="911" y="465" width="2" height="2" fill="#408080"/>
<rect x="914" y="478" width="2" height="2" fill="#408080"/>
<rect x="917" y="480" width="2" height="2" fill="#408080"/>
<rect x="919" y="503" width="2" height="2" fill="#408080"/>
<rect x="923" y="520" width="2" height="2" fill="#408080"/>
<rect x="927" y="503" width="2" height="2" fill="#408080"/>
<rect x="930" y="511" width="2" height="2" fill="#408080"/>
<rect x="935" y="472" width="2" height="2" fill="#408080"/>
<rect x="937" y="484" width="2" height="2" fill="#408080"/>
<rect x="939" y="466" width="2" height="2" fill="#408080"/>
<rect x="941" y="488" width="2" height="2" fill="#408080"/>
<rect x="943" y="469" width="2" height="2" fill="#408080"/>
<rect x="944" y="482" width="2" height="2" fill="#408080"/>
<rect x="946" y="470" width="2" height="2" fill="#408080"/>
<rect x="948" y="474" width="2" height="2" fill="#408080"/>
<rect x="950" y="452" width="2" height="2" fill="#408080"/>
<rect x="952" y="444" width="2" height="2" fill="#408080"/>
<rect x="954" y="479" width="2" height="2" fill="#408080"/>
<rect x="956" y="456" width="2" height="2" fill="#408080"/>
<rect x="959" y="447" width="2" height="2" fill="#408080"/>
<rect x="961" y="442" width="2" height="2" fill="#408080"/>
<rect x="963" y="482" width="2" height="2" fill="#408080"/>
<rect x="965" y="452" width="2" height="2" fill="#408080"/>
<rect x="967" y="459" width="2" height="2" fill="#408080"/>
<rect x="969" y="456" width="2" height="2" fill="#408080"/>
<rect x="971" y="470" width="2" height="2" fill="#408080"/>
<rect x="972" y="479" width="2" height="2" fill="#408080"/>
<rect x="974" y="487" width="2" height="2" fill="#408080"/>
<rect x="976" y="474" width="2" height="2" fill="#408080"/>
<rect x="978" y="480" width="2" height="2" fill="#408080"/>
<rect x="980" y="467" width="2" height="2" fill="#408080"/>
<rect x="982" y="456" width="2" height="2" fill="#408080"/>
<rect x="984" y="441" width="2" height="2" fill="#408080"/>
<rect x="985" y="479" width="2" height="2" fill="#408080"/>
<rect x="987" y="451" width="2" height="2" fill="#408080"/>
<rect x="989" y="466" width="2" height="2" fill="#408080"/>
<rect x="991" y="452" width="2" height="2" fill="#408080"/>
<rect x="993" y="441" width="2" height="2" fill="#408080"/>
<rect x="995" y="446" width="2" height="2" fill="#408080"/>
<rect x="997" y="478" width="2" height="2" fill="#408080"/>
<rect x="1000" y="447" width="2" height="2" fill="#408080"/>
<rect x="1002" y="472" width="2" height="2" fill="#408080"/>
<rect x="1004" y="459" width="2" height="2" fill="#408080"/>
<rect x="1005" y="487" width="2" height="2" fill="#408080"/>
<rect x="1008" y="454" width="2" height="2" fill="#408080"/>
<rect x="1010" y="457" width="2" height="2" fill="#408080"/>
<rect x="1013" y="440" width="2" height="2" fill="#408080"/>
<rect x="1015" y="421" width="2" height="2" fill="#408080"/>
<rect x="1017" y="436" width="2" height="2" fill="#408080"/>
<rect x="1021" y="452" width="2" height="2" fill="#408080"/>
<rect x="1023" y="482" width="2" height="2" fill="#408080"/>
<rect x="1025" y="453" width="2" height="2" fill="#408080"/>
<rect x="1026" y="463" width="2" height="2" fill="#408080"/>
<rect x="1027" y="452" width="2" height="2" fill="#408080"/>
<rect x="1030" y="461" width="2" height="2" fill="#408080"/>
<rect x="1032" y="452" width="2" height="2" fill="#408080"/>
<rect x="1034" y="447" width="2" height="2" fill="#408080"/>
<rect x="1036" y="439" width="2" height="2" fill="#408080"/>
<rect x="1038" y="453" width="2" height="2" fill="#408080"/>
<rect x="1041" y="454" width="2" height="2" fill="#408080"/>
<rect x="1043" y="493" width="2" height="2" fill="#408080"/>
<rect x="1045" y="471" width="2" height="2" fill="#408080"/>
<rect x="1047" y="475" width="2" height="2" fill="#408080"/>
<rect x="1049" y="464" width="2" height="2" fill="#408080"/>
<rect x="1051" y="492" width="2" height="2" fill="#408080"/>
<rect x="1054" y="470" width="2" height="2" fill="#408080"/>
<rect x="1056" y="490" width="2" height="2" fill="#408080"/>
<rect x="1058" y="468" width="2" height="2" fill="#408080"/>
<rect x="1060" y="470" width="2" height="2" fill="#408080"/>
<rect x="1062" y="461" width="2" height="2" fill="#408080"/>
<rect x="1064" y="467" width="2" height="2" fill="#408080"/>
<rect x="1065" y="452" width="2" height="2" fill="#408080"/>
<rect x="1069" y="449" width="2" height="2" fill="#408080"/>
<rect x="1071" y="458" width="2" height="2" fill="#408080"/>
<rect x="1073" y="466" width="2" height="2" fill="#408080"/>
<rect x="1075" y="480" width="2" height="2" fill="#408080"/>
<rect x="1077" y="471" width="2" height="2" fill="#408080"/>
<rect x="1078" y="473" width="2" height="2" fill="#408080"/>
<rect x="1081" y="479" width="2" height="2" fill="#408080"/>
<rect x="1082" y="466" width="2" height="2" fill="#408080"/>
<rect x="1084" y="474" width="2" height="2" fill="#408080"/>
<rect x="1086" y="459" width="2" height="2" fill="#408080"/>
<rect x="1089" y="457" width="2" height="2" fill="#408080"/>
<rect x="1090" y="462" width="2" height="2" fill="#408080"/>
<rect x="1093" y="454" width="2" height="2" fill="#408080"/>
<rect x="1095" y="466" width="2" height="2" fill="#408080"/>
<rect x="1097" y="466" width="2" height="2" fill="#408080"/>
<rect x="1099" y="471" width="2" height="2" fill="#408080"/>
<rect x="1105" y="473" width="2" height="2" fill="#408080"/>
<rect x="1110" y="471" width="2" height="2" fill="#408080"/>
<rect x="1099" y="471" width="2" height="2" fill="#408080"/>
<rect x="1105" y="473" width="2" height="2" fill="#408080"/>
<rect x="1110" y="471" width="2" height="2" fill="#408080"/>
<rect x="1209" y="466" width="2" height="2" fill="#408080"/>
<rect x="1218" y="462" width="2" height="2" fill="#408080"/>
<rect x="1246" y="459" width="2" height="2" fill="#408080"/>
<rect x="1248" y="459" width="2" height="2" fill="#408080"/>
<rect x="1253" y="460" width="2" height="2" fill="#408080"/>
<rect x="1255" y="459" width="2" height="2" fill="#408080"/>
<rect x="1257" y="458" width="2" height="2" fill="#408080"/>
<rect x="1259" y="451" width="2" height="2" fill="#408080"/>
<rect x="1262" y="453" width="2" height="2" fill="#408080"/>
<rect x="1264" y="453" width="2" height="2" fill="#408080"/>
<rect x="1266" y="454" width="2" height="2" fill="#408080"/>
<rect x="1268" y="451" width="2" height="2" fill="#408080"/>
<rect x="1270" y="440" width="2" height="2" fill="#408080"/>
<rect x="1272" y="435" width="2" height="2" fill="#408080"/>
<rect x="1279" y="422" width="2" height="2" fill="#408080"/>
<rect x="1333" y="424" width="2" height="2" fill="#408080"/>
<rect x="1412" y="422" width="2" height="2" fill="#408080"/>
<rect x="1415" y="420" width="2" height="2" fill="#408080"/>
<rect x="1417" y="421" width="2" height="2" fill="#408080"/>
<rect x="1421" y="427" width="2" height="2" fill="#408080"/>
<rect x="1423" y="429" width="2" height="2" fill="#408080"/>
<rect x="1432" y="435" width="2" height="2" fill="#408080"/>
<rect x="1445" y="433" width="2" height="2" fill="#408080"/>
<line x1="189" y1="767.5" x2="1527" y2="767.5" stroke="#008000" stroke-width="1" />
<polyline points="191.9,766.5 194.1,762.1 196.3,744.4 198.5,757.6 200.7,754.7 202.9,760.6 205.1,756.2 208.1,762.1 211.0,750.3 213.9,747.4 216.1,744.4 217.6,756.2 220.6,737.1 224.2,751.8 226.4,751.8 228.6,757.6 231.6,750.3 234.5,762.1 237.5,748.8 240.4,753.2 243.4,751.8 246.3,765.0 248.5,766.5 254.4,750.3 257.4,757.6 258.8,750.3 261.8,757.6 267.6,765.0 272.1,728.2 274.3,742.9 276.5,756.2 279.4,751.8 281.6,763.5 283.8,731.2 286.8,750.3 289.7,740.0 292.6,742.9 295.6,757.6 300.0,740.0 302.9,754.7 305.9,747.4 308.8,742.9 311.8,745.9 315.4,766.5 319.1,751.8 322.1,765.0 326.5,757.6 329.4,766.5 332.4,760.6 335.3,763.5 338.2,760.6 341.2,735.6 344.1,754.7 347.8,737.1 351.5,751.8 355.9,760.6 359.6,745.9 363.2,754.7 367.6,750.3 372.1,757.6 376.5,748.8 379.4,751.8 382.4,740.0 385.3,737.1 388.2,754.7 391.2,760.6 395.6,744.4 398.5,760.6 402.9,753.2 405.9,747.4 410.3,765.0 413.2,748.8 416.2,753.2 420.6,751.8 424.3,750.3 427.9,763.5 432.4,766.5 440.0,766.5" fill="none" stroke="#008000" stroke-width="2.4" stroke-linejoin="miter" stroke-miterlimit="2" shape-rendering="crispEdges" />
<polyline points="430.0,768.7 433.1,766.4 471.9,766.4 479.6,747.8 485.0,757.8 488.9,766.4 490.5,762.5 492.0,766.4 506.0,766.4 506.7,764.8 509.1,766.4" fill="none" stroke="#008000" stroke-width="2.4" stroke-linejoin="miter" stroke-miterlimit="2" shape-rendering="crispEdges" />
<polyline points="701.8,767.0 704.3,763.2 706.8,765.7 713.0,751.4 715.5,762.0 718.0,767.0 721.7,767.0 724.8,762.0 727.3,730.9 731.7,740.9 735.4,757.0 739.1,740.9" fill="none" stroke="#008000" stroke-width="2.4" stroke-linejoin="miter" stroke-miterlimit="2" shape-rendering="crispEdges" />
<polyline points="720.0,766.6 724.7,764.2 728.3,731.0 730.7,740.5 734.2,755.9 737.8,731.0 741.4,755.9 743.7,712.0 747.3,685.9 750.9,702.5 755.6,716.7 758.0,668.1 760.4,712.0 763.9,733.4 767.5,702.5 769.9,731.0 772.2,702.5 775.8,697.7 778.2,745.2 781.7,714.4 785.3,723.9 788.9,668.1 793.6,702.5 798.4,735.7 800.7,679.9 804.3,688.2 807.9,742.9 810.2,693.0 813.8,735.7 817.4,723.9 820.9,690.6 824.5,754.7 828.1,704.9 831.6,690.6 835.2,731.0 838.7,685.9 842.3,702.5 844.7,742.9 848.2,683.5 850.6,716.7 855.4,681.1 860.1,697.7 863.7,735.7 867.2,674.0 872.0,688.2 876.7,674.0 880.3,738.1 885.0,690.6 888.6,714.4 892.2,697.7 895.7,761.9" fill="none" stroke="#008000" stroke-width="2.4" stroke-linejoin="miter" stroke-miterlimit="2" shape-rendering="crispEdges" />
<polyline points="890.0,697.7 893.6,714.4 895.9,761.9 899.5,689.4 905.4,726.2 909.0,653.8 912.6,733.4 916.1,662.1 919.7,674.0 923.2,723.9 929.2,662.1 932.7,704.9 941.1,702.5 943.4,726.2 944.6,679.9 949.4,684.7 955.3,723.9 957.7,689.4 961.2,712.0 966.0,690.6 971.9,702.5 974.3,659.7 976.7,693.0 979.8,643.1 985.0,727.4 987.4,675.2 992.1,702.5 996.9,676.4 1001.6,735.7 1005.2,704.9 1007.5,731.0 1009.9,662.1 1013.5,712.0 1015.9,721.5 1020.6,681.1 1023.0,735.7 1026.5,704.9 1030.1,731.0 1032.5,687.0 1036.0,712.0 1039.6,697.7 1043.2,726.2 1046.7,709.6 1053.5,709.1 1056.5,728.2 1059.4,757.6 1061.6,731.2 1065.3,756.2 1070.4,740.0 1074.1,745.9 1078.5,744.4 1081.5,763.5 1083.7,740.0 1085.9,759.1 1090.3,760.6 1094.7,759.1 1097.6,766.5 1100.6,766.5 1106.5,765.0 1112.4,766.5 1118.2,766.8" fill="none" stroke="#008000" stroke-width="2.4" stroke-linejoin="miter" stroke-miterlimit="2" shape-rendering="crispEdges" />
<polyline points="1247.0,767.0 1250.8,766.4 1253.3,758.9 1257.0,755.8 1262.0,743.4 1264.5,757.1 1269.4,764.5 1271.3,757.7 1273.2,767.0 1275.7,767.3 1331.7,767.3 1333.5,760.8 1336.0,767.0" fill="none" stroke="#008000" stroke-width="2.4" stroke-linejoin="miter" stroke-miterlimit="2" shape-rendering="crispEdges" />
<polyline points="1333.1,767.0 1334.4,761.4 1336.2,767.0 1417.1,767.0 1422.1,760.2 1424.6,767.0 1432.1,767.0 1433.9,763.9 1435.8,767.0" fill="none" stroke="#008000" stroke-width="2.4" stroke-linejoin="miter" stroke-miterlimit="2" shape-rendering="crispEdges" />
<line x1="189" y1="767.5" x2="1527" y2="767.5" stroke="#0000ff" stroke-width="1" stroke-dasharray="2,2"/>
<polyline points="188.4,514.2 197.1,514.2 198.7,515.8 208.2,515.8 210.5,517.8 213.7,515.8 216.1,517.8 223.2,518.2 224.0,519.0 235.1,519.0 235.9,520.5 242.2,520.9 243.8,522.6 264.4,522.9 266.0,524.5 285.7,524.8 286.5,525.8 307.1,525.8 309.5,527.7 341.2,528.0 342.7,530.8 357.0,530.8 359.4,532.7 363.3,530.8 366.5,532.7 376.0,532.7 377.6,534.8 383.9,534.8 385.5,532.7 387.1,534.8 390.2,532.7 395.0,532.7 395.8,534.8 407.7,534.8 409.2,536.8 429.8,536.8 433.2,534.8 442.7,534.8 445.0,532.7 452.2,532.7 453.7,534.8 471.2,534.8 473.5,536.8 479.1,536.8 481.5,534.8 487.8,534.8 490.2,536.8 498.9,536.8 500.5,538.0 517.9,538.0 518.7,536.8 541.6,536.8 547.2,539.5 556.7,539.5 558.2,541.9 563.0,541.9 570.9,538.0 599.4,538.0 601.0,536.8 610.5,534.8 616.0,534.8 618.4,537.2 621.6,534.8 639.0,534.8 641.4,532.7 663.5,532.7 664.3,534.8 675.4,534.8 677.8,532.7 693.3,534.6 723.2,533.2 734.0,536.5 755.8,537.3 774.8,539.4 793.8,541.3 810.1,543.2 826.4,546.8 837.3,552.2 880.0,553.4 947.8,555.5 958.7,558.3 1015.7,554.7 1040.0,555.0 1043.0,554.9 1046.0,554.8 1049.0,553.7 1052.0,553.6 1055.0,554.5 1058.0,553.5 1061.0,552.4 1064.0,554.4 1067.0,553.4 1070.0,553.4 1073.0,552.4 1076.0,552.4 1079.0,554.4 1082.0,554.4 1085.0,553.1 1088.0,551.6 1091.0,551.2 1094.0,550.8 1097.0,550.4 1100.0,550.9 1103.0,550.6 1106.0,549.3 1109.0,551.1 1112.0,549.8 1115.0,550.6 1118.0,549.3 1121.0,549.1 1124.0,548.8 1127.0,549.6 1130.0,547.4 1133.0,547.1 1136.0,548.9 1139.0,547.6 1142.0,548.4 1145.0,546.1 1148.0,546.9 1151.0,546.7 1154.0,546.4 1157.0,546.2 1160.0,544.8 1163.0,544.3 1166.0,543.8 1169.0,545.3 1172.0,542.8 1175.0,543.3 1178.0,543.7 1181.0,541.3 1184.0,540.9 1187.0,540.4 1190.0,541.0 1193.0,540.6 1196.0,539.2 1199.0,540.8 1202.0,540.8 1205.0,540.8 1208.0,540.8 1211.0,538.8 1214.0,539.8 1217.0,539.8 1220.0,539.8 1223.0,538.8 1226.0,539.8 1229.0,539.8 1232.0,538.8 1235.0,540.8 1238.0,538.8 1241.0,539.8 1244.0,540.4 1247.0,540.1 1250.0,540.7 1253.0,541.3 1256.0,544.0 1259.0,544.6 1262.0,543.9 1265.0,543.6 1268.0,544.4 1271.0,543.1 1274.0,542.9 1277.0,543.6 1280.0,543.4 1283.0,541.1 1286.0,542.9 1289.0,542.5 1292.0,541.2 1295.0,540.0 1298.0,540.6 1301.0,540.3 1304.0,539.0 1307.0,539.7 1310.0,539.4 1313.0,540.1 1316.0,537.8 1319.0,537.5 1322.0,538.2 1325.0,537.9 1328.0,538.6 1331.0,537.3 1334.0,536.0 1337.0,536.7 1340.0,536.4 1343.0,537.1 1346.0,534.8 1349.0,534.5 1352.0,534.2 1355.0,535.5 1358.0,536.1 1361.0,535.6 1364.0,537.1 1367.0,537.4 1370.0,538.5 1373.0,537.6 1376.0,538.7 1379.0,537.8 1382.0,538.9 1385.0,538.0 1388.0,538.1 1391.0,538.2 1394.0,538.3 1397.0,538.4 1400.0,538.8 1403.0,539.5 1406.0,539.9 1409.0,540.4 1412.0,540.0 1415.0,537.5 1418.0,539.1 1421.0,537.0 1424.0,536.9 1427.0,536.8 1430.0,536.7 1433.0,537.6 1436.0,537.6 1439.0,538.5 1442.0,537.3 1445.0,537.8 1448.0,537.4 1451.0,536.0 1454.0,535.5 1457.0,534.1 1460.0,534.7 1463.0,534.2 1466.0,534.9 1469.0,532.6 1472.0,533.3 1475.0,533.0 1478.0,532.7 1481.0,531.4 1484.0,531.2 1487.0,531.9 1490.0,532.6 1493.0,532.3 1496.0,531.0 1499.0,529.8 1502.0,529.7 1505.0,530.6 1508.0,530.5 1511.0,530.4 1514.0,530.3 1517.0,529.2 1520.0,530.1 1523.0,530.0 1526.0,530.9 1526.4,529.9" fill="none" stroke="#000000" stroke-width="2" stroke-linejoin="miter" stroke-miterlimit="2" shape-rendering="crispEdges" />
<polyline points="188.0,184.6 198.0,186.9 205.7,184.8 246.8,183.7 258.4,183.6 259.0,181.9 268.0,182.6 271.9,181.0 282.6,178.0 327.3,178.0 329.0,175.6 341.6,171.5 356.0,170.3 407.8,169.7 410.5,166.7 416.8,167.9 427.5,163.6 436.4,162.8 474.0,162.8 479.4,159.5 486.0,157.5 495.0,157.0 502.5,160.5 517.6,156.3 687.9,156.3 690.4,153.0 700.4,152.0 707.9,151.3 718.0,154.5 730.4,155.8 740.5,162.5 748.0,168.0 758.0,185.0 760.5,191.3 770.5,202.6 775.5,212.6 788.0,228.9 795.6,234.0 810.6,250.2 818.0,259.0 830.6,274.0 833.0,276.5 840.6,279.0 853.0,285.3 870.7,295.3 878.2,302.8 885.7,304.0 895.0,312.8 905.0,317.8 915.0,322.3 922.6,321.6 930.0,325.3 940.0,327.3 947.6,332.3 960.0,334.0 972.7,335.3 1000.2,334.8 1002.7,332.8 1012.7,334.8 1020.2,332.3 1025.3,333.6 1030.3,331.6 1045.3,329.0 1060.3,320.3 1070.3,315.3 1080.4,312.8 1090.4,302.8 1100.4,300.3 1115.4,285.3 1135.4,261.5 1145.5,252.7 1155.5,240.2 1165.5,236.4 1175.5,233.2 1188.0,227.7 1200.6,221.4 1205.6,216.4 1215.6,214.6 1228.1,207.6 1248.1,206.4 1250.6,203.9 1260.7,198.9 1270.7,193.1 1293.6,191.8 1296.4,187.9 1301.4,186.5 1308.6,185.0 1330.0,185.0 1331.5,182.2 1340.0,178.6 1350.0,177.9 1353.0,174.6 1357.3,175.8 1363.0,176.9 1365.8,174.3 1373.0,171.8 1393.0,170.8 1395.2,169.3 1407.3,169.8 1411.6,166.9 1418.8,164.6 1430.2,163.6 1431.7,162.6 1526.0,162.6" fill="none" stroke="#808080" stroke-width="2" stroke-linejoin="miter" stroke-miterlimit="2" shape-rendering="crispEdges" />
<polyline points="188.0,502.0 1388.6,502.0 1390.0,504.3 1392.5,504.2 1395.0,502.2 1397.5,504.7 1400.0,503.4 1402.5,502.5 1405.0,504.6 1407.5,503.7 1410.0,505.8 1412.5,507.9 1415.0,507.0 1417.5,508.1 1420.0,504.7 1422.5,505.9 1425.0,504.0 1427.5,505.1 1430.0,506.3 1432.5,504.7 1435.0,505.0 1437.5,506.7 1440.0,505.5 1442.5,504.2 1445.0,505.9 1447.5,507.7 1450.0,506.6 1452.5,507.0 1455.0,505.9 1457.5,506.3 1460.0,508.2 1462.5,508.7 1465.0,508.5 1467.5,507.4 1470.0,506.3 1472.5,505.2 1475.0,505.3 1477.5,507.0 1480.0,508.7 1482.5,510.4 1485.0,512.7 1487.5,511.2 1490.0,509.7 1492.5,511.2 1495.0,512.7 1497.5,511.1 1500.0,510.9 1502.5,510.6 1505.0,508.9 1507.5,510.1 1510.0,509.8 1512.5,508.1 1515.0,509.3 1517.5,507.5 1520.0,508.7 1522.5,508.4 1525.0,508.1 1526.4,507.9" fill="none" stroke="#808000" stroke-width="2" stroke-linejoin="miter" stroke-miterlimit="2" shape-rendering="crispEdges" />
<polyline points="189.0,717.5 190.5,720.5 196.4,725.0 206.9,726.5 221.8,725.0 227.7,726.5 248.6,726.5 250.1,731.7 254.6,734.0 263.5,738.4 269.5,741.4 275.4,732.4 282.9,729.4 288.9,717.5 296.3,710.8 302.3,713.0 314.2,714.5 326.1,729.4 329.1,730.9 342.5,721.2 350.0,720.5 354.5,722.7 358.9,718.3 366.4,716.8 373.8,723.5 381.3,725.0 391.7,727.2 396.2,729.4 400.7,728.0 412.6,734.7 420.0,730.2 427.5,741.4 436.0,749.6 439.3,750.9 445.5,759.4 451.7,764.0 456.4,766.4 492.0,766.4 496.0,772.0 684.0,772.0 688.1,767.0 691.8,762.0 696.8,755.8 700.6,749.0 704.4,747.5 719.7,726.1 735.0,698.6 750.3,661.9 771.7,616.1 783.9,579.4 793.0,555.0 799.2,524.4 804.7,502.0 810.0,488.4 815.5,469.4 823.7,455.8 834.6,439.5 838.6,431.4 844.0,432.7 850.8,439.5 861.7,454.4 865.8,455.8 872.6,450.4 880.0,436.7 885.4,424.5 893.6,419.9 904.4,428.5 912.6,453.0 920.7,469.3 927.5,463.8 931.6,444.8 937.0,398.7 945.1,359.3 953.3,355.3 957.3,344.4 969.6,341.2 976.3,352.6 983.1,371.6 994.0,440.8 998.0,440.8 1007.5,413.6 1013.0,417.7 1026.5,482.8 1034.7,501.8 1042.8,520.8 1056.4,537.1 1060.0,539.8 1079.8,562.4 1088.3,582.2 1102.4,607.7 1110.9,627.5 1119.4,655.8 1130.7,672.8 1140.0,684.3 1146.2,694.8 1156.2,698.6 1158.7,704.2 1164.9,700.4 1167.4,706.0 1174.8,712.9 1197.2,714.8 1199.7,719.7 1207.2,716.6 1214.7,724.7 1220.9,722.9 1222.1,724.7 1244.5,727.2 1247.0,732.2 1249.5,729.1 1264.5,727.8 1269.4,719.7 1275.7,717.2 1281.9,723.5 1289.3,726.0 1303.0,727.2 1308.0,735.9 1314.2,738.4 1326.7,740.9 1334.2,749.6 1340.0,745.3 1341.2,745.3 1347.4,751.5 1366.1,752.7 1369.8,759.6 1378.5,766.4 1387.2,767.0 1417.1,767.0 1422.7,763.3 1430.8,757.7 1437.0,764.5 1440.8,761.4 1444.5,763.3 1448.2,761.4 1452.0,765.8 1460.7,767.0 1465.7,772.0" fill="none" stroke="#804040" stroke-width="2" stroke-linejoin="miter" stroke-miterlimit="2" shape-rendering="crispEdges" />
<polyline points="189.0,657.9 195.0,661.6 202.4,664.6 221.8,665.3 223.3,666.8 244.1,666.8 245.6,669.8 251.6,671.3 265.0,672.0 266.5,673.5 272.5,673.5 275.4,671.3 284.4,671.3 287.4,668.3 290.4,669.8 296.3,666.8 300.8,667.6 302.3,669.8 315.7,669.8 324.6,675.0 326.1,677.0 356.0,677.0 357.4,674.3 372.4,673.5 376.8,675.8 385.8,677.3 394.7,679.0 396.2,681.7 412.6,682.5 418.6,684.7 424.5,687.7 430.0,688.8 434.7,690.4 444.0,691.2 445.5,693.8 450.2,695.0 451.7,697.7 461.0,697.7 462.6,700.8 471.9,701.2 474.2,702.8 476.5,698.1 484.3,697.7 485.8,700.8 490.5,698.9 495.1,698.9 496.7,700.8 502.9,702.8 519.9,702.8 523.0,706.4 529.2,707.9 533.1,712.1 541.6,713.6 544.7,712.6 552.5,715.2 554.0,717.5 569.5,717.5 572.6,714.7 576.5,715.2 580.4,718.3 582.7,721.9 588.1,721.4 591.2,717.5 596.7,717.2 598.2,714.7 610.6,714.7 616.0,720.9 619.9,724.5 628.4,726.0 634.7,725.0 642.4,726.8 645.5,724.5 654.8,724.5 657.9,726.8 670.3,726.8 673.4,725.0 679.6,724.5 684.3,720.6 690.0,712.9 704.4,695.5 722.8,669.6 741.1,646.7 759.4,623.7 771.7,613.0 786.9,594.7 802.2,577.9 817.5,564.2 832.8,553.5 840.0,551.1 843.0,551.1 846.0,550.1 849.0,548.1 852.0,547.6 855.0,543.9 858.0,542.2 861.0,538.5 864.0,535.8 867.0,532.2 870.0,530.1 873.0,529.0 876.0,527.8 879.0,523.7 882.0,522.8 885.0,522.3 888.0,521.8 891.0,520.3 894.0,521.5 897.0,519.7 900.0,517.8 903.0,513.9 906.0,513.5 909.0,513.5 912.0,510.5 915.0,510.5 918.0,508.5 921.0,508.4 924.0,505.9 927.0,504.4 930.0,502.9 933.0,503.4 936.0,500.9 939.0,499.4 942.0,498.9 945.0,500.4 948.0,501.5 951.0,502.9 954.0,499.9 957.0,499.9 960.0,497.6 963.0,496.3 966.0,497.0 969.0,496.7 972.0,495.4 975.0,495.1 978.0,496.8 981.0,496.5 984.0,495.2 987.0,495.5 990.0,496.7 993.0,498.9 996.0,498.0 999.0,497.5 1002.0,498.1 1005.0,497.6 1008.0,496.1 1011.0,496.7 1014.0,496.2 1017.0,494.7 1020.0,493.3 1023.0,492.8 1026.0,495.1 1029.0,498.1 1032.0,498.1 1035.0,501.5 1038.0,500.8 1041.0,503.2 1044.0,504.5 1047.0,504.7 1050.0,506.9 1053.0,508.1 1056.0,509.3 1059.0,510.5 1064.5,512.7 1080.8,523.5 1099.8,535.7 1074.1,520.0 1085.5,527.1 1099.6,535.6 1108.1,548.3 1116.6,562.4 1127.9,579.4 1139.2,593.0 1144.9,596.4 1150.5,601.5 1164.7,601.5 1178.8,616.2 1190.1,620.4 1201.4,626.1 1209.9,630.3 1226.9,630.3 1238.2,638.8 1249.5,649.6 1258.0,644.5 1272.2,626.1 1286.3,638.8 1297.6,641.6 1306.1,647.3 1316.4,652.2 1332.8,663.1 1342.7,666.4 1352.5,667.0 1362.3,675.2 1378.7,685.0 1388.6,681.8 1398.4,686.7 1414.8,686.0 1431.2,681.8 1444.4,684.1 1464.0,693.3 1477.2,698.2 1496.9,708.0 1513.3,714.6 1526.4,717.9" fill="none" stroke="#ff0000" stroke-width="2" stroke-linejoin="miter" stroke-miterlimit="2" shape-rendering="crispEdges" />
</g>
<defs><clipPath id="chartclip"><rect x="189" y="49" width="1338" height="719"/></clipPath></defs>
<rect x="1" y="800" width="1675" height="84" fill="#006edd"/>
<rect x="87" y="800" width="1" height="84" fill="#fff"/>
<rect x="88" y="800" width="1" height="84" fill="#a09890"/>
<rect x="204" y="800" width="1" height="84" fill="#fff"/>
<rect x="205" y="800" width="1" height="84" fill="#a09890"/>
<rect x="322" y="800" width="1" height="84" fill="#fff"/>
<rect x="323" y="800" width="1" height="84" fill="#a09890"/>
<rect x="440" y="800" width="1" height="84" fill="#fff"/>
<rect x="441" y="800" width="1" height="84" fill="#a09890"/>
<rect x="558" y="800" width="1" height="84" fill="#fff"/>
<rect x="559" y="800" width="1" height="84" fill="#a09890"/>
<rect x="676" y="800" width="1" height="84" fill="#fff"/>
<rect x="677" y="800" width="1" height="84" fill="#a09890"/>
<rect x="794" y="800" width="1" height="84" fill="#fff"/>
<rect x="795" y="800" width="1" height="84" fill="#a09890"/>
<rect x="912" y="800" width="1" height="84" fill="#fff"/>
<rect x="913" y="800" width="1" height="84" fill="#a09890"/>
<rect x="1676" y="800" width="1" height="84" fill="#fff"/>
<rect x="1677" y="800" width="1" height="84" fill="#a09890"/>
<text transform="translate(8,818) scale(1,1.1)" x="0" y="0" fill="#000" text-anchor="start" font-size="11" font-weight="bold" xml:space="preserve" letter-spacing="0.35">Sensor</text>
<text transform="translate(8,834) scale(1,1.1)" x="0" y="0" fill="#000" text-anchor="start" font-size="11" font-weight="bold" xml:space="preserve" letter-spacing="0.35">MinWert</text>
<text transform="translate(8,850) scale(1,1.1)" x="0" y="0" fill="#000" text-anchor="start" font-size="11" font-weight="bold" xml:space="preserve" letter-spacing="0.35">MaxWert</text>
<text transform="translate(8,866) scale(1,1.1)" x="0" y="0" fill="#000" text-anchor="start" font-size="11" font-weight="bold" xml:space="preserve" letter-spacing="0.35">Durchschnitt</text>
<text transform="translate(8,882) scale(1,1.1)" x="0" y="0" fill="#000" text-anchor="start" font-size="11" font-weight="bold" xml:space="preserve" letter-spacing="0.35">22.01. 23:58</text>
<text transform="translate(95,818) scale(1,1.1)" x="0" y="0" fill="#000" text-anchor="start" font-size="11" font-weight="bold" xml:space="preserve" letter-spacing="0.35">Temperatur</text>
<text transform="translate(198,818) scale(1,1.1)" x="0" y="0" fill="#000" text-anchor="end" font-size="11" font-weight="bold" xml:space="preserve" letter-spacing="0.35">°C</text>
<text transform="translate(100,834) scale(1,1.1)" x="0" y="0" fill="#000" text-anchor="start" font-size="11" font-weight="normal" xml:space="preserve">08:38</text>
<text transform="translate(198,834) scale(1,1.1)" x="0" y="0" fill="#000" text-anchor="end" font-size="11" font-weight="normal" xml:space="preserve">-8.3</text>
<text transform="translate(100,850) scale(1,1.1)" x="0" y="0" fill="#000" text-anchor="start" font-size="11" font-weight="normal" xml:space="preserve">14:58</text>
<text transform="translate(198,850) scale(1,1.1)" x="0" y="0" fill="#000" text-anchor="end" font-size="11" font-weight="normal" xml:space="preserve">1.4</text>
<text transform="translate(198,866) scale(1,1.1)" x="0" y="0" fill="#000" text-anchor="end" font-size="11" font-weight="normal" xml:space="preserve">-4.54</text>
<text transform="translate(198,882) scale(1,1.1)" x="0" y="0" fill="#000" text-anchor="end" font-size="11" font-weight="bold" xml:space="preserve" letter-spacing="0.35">-7.9</text>
<text transform="translate(213,818) scale(1,1.1)" x="0" y="0" fill="#000" text-anchor="start" font-size="11" font-weight="bold" xml:space="preserve" letter-spacing="0.35">Temp. +5 cm</text>
<text transform="translate(316,818) scale(1,1.1)" x="0" y="0" fill="#000" text-anchor="end" font-size="11" font-weight="bold" xml:space="preserve" letter-spacing="0.35">°C</text>
<text transform="translate(218,834) scale(1,1.1)" x="0" y="0" fill="#000" text-anchor="start" font-size="11" font-weight="normal" xml:space="preserve">23:58</text>
<text transform="translate(316,834) scale(1,1.1)" x="0" y="0" fill="#000" text-anchor="end" font-size="11" font-weight="normal" xml:space="preserve">-11.1</text>
<text transform="translate(218,850) scale(1,1.1)" x="0" y="0" fill="#000" text-anchor="start" font-size="11" font-weight="normal" xml:space="preserve">13:46</text>
<text transform="translate(316,850) scale(1,1.1)" x="0" y="0" fill="#000" text-anchor="end" font-size="11" font-weight="normal" xml:space="preserve">8.3</text>
<text transform="translate(316,866) scale(1,1.1)" x="0" y="0" fill="#000" text-anchor="end" font-size="11" font-weight="normal" xml:space="preserve">-6.11</text>
<text transform="translate(316,882) scale(1,1.1)" x="0" y="0" fill="#000" text-anchor="end" font-size="11" font-weight="bold" xml:space="preserve" letter-spacing="0.35">-11.1</text>
<text transform="translate(330,818) scale(1,1.1)" x="0" y="0" fill="#000" text-anchor="start" font-size="11" font-weight="bold" xml:space="preserve" letter-spacing="0.35">Solarstrahlg</text>
<text transform="translate(434,818) scale(1,1.1)" x="0" y="0" fill="#000" text-anchor="end" font-size="11" font-weight="bold" xml:space="preserve" letter-spacing="0.35">W/m²</text>
<text transform="translate(330,834) scale(1,1.1)" x="0" y="0" fill="#000" text-anchor="start" font-size="11" font-weight="normal" xml:space="preserve">Elevation</text>
<text transform="translate(434,834) scale(1,1.1)" x="0" y="0" fill="#000" text-anchor="end" font-size="11" font-weight="normal" xml:space="preserve">-57.341</text>
<text transform="translate(336,850) scale(1,1.1)" x="0" y="0" fill="#000" text-anchor="start" font-size="11" font-weight="normal" xml:space="preserve">12:30</text>
<text transform="translate(434,850) scale(1,1.1)" x="0" y="0" fill="#000" text-anchor="end" font-size="11" font-weight="normal" xml:space="preserve">302</text>
<text transform="translate(330,866) scale(1,1.1)" x="0" y="0" fill="#000" text-anchor="start" font-size="11" font-weight="normal" xml:space="preserve">Tag:5:44 h</text>
<text transform="translate(434,866) scale(1,1.1)" x="0" y="0" fill="#000" text-anchor="end" font-size="11" font-weight="normal" xml:space="preserve">161</text>
<text transform="translate(330,882) scale(1,1.1)" x="0" y="0" fill="#000" text-anchor="start" font-size="11" font-weight="normal" xml:space="preserve">dunkel</text>
<text transform="translate(434,882) scale(1,1.1)" x="0" y="0" fill="#000" text-anchor="end" font-size="11" font-weight="bold" xml:space="preserve" letter-spacing="0.35">0</text>
<text transform="translate(449,818) scale(1,1.1)" x="0" y="0" fill="#000" text-anchor="start" font-size="11" font-weight="bold" xml:space="preserve" letter-spacing="0.35">Luftdruck</text>
<text transform="translate(552,818) scale(1,1.1)" x="0" y="0" fill="#000" text-anchor="end" font-size="11" font-weight="bold" xml:space="preserve" letter-spacing="0.35">hPa</text>
<text transform="translate(454,834) scale(1,1.1)" x="0" y="0" fill="#000" text-anchor="start" font-size="11" font-weight="normal" xml:space="preserve">13:50</text>
<text transform="translate(552,834) scale(1,1.1)" x="0" y="0" fill="#000" text-anchor="end" font-size="11" font-weight="normal" xml:space="preserve">1002.2</text>
<text transform="translate(454,850) scale(1,1.1)" x="0" y="0" fill="#000" text-anchor="start" font-size="11" font-weight="normal" xml:space="preserve">00:04</text>
<text transform="translate(552,850) scale(1,1.1)" x="0" y="0" fill="#000" text-anchor="end" font-size="11" font-weight="normal" xml:space="preserve">1004.9</text>
<text transform="translate(449,866) scale(1,1.1)" x="0" y="0" fill="#000" text-anchor="start" font-size="11" font-weight="normal" xml:space="preserve">^0.8hPa/h</text>
<text transform="translate(552,866) scale(1,1.1)" x="0" y="0" fill="#000" text-anchor="end" font-size="11" font-weight="normal" xml:space="preserve">1003.3</text>
<text transform="translate(449,882) scale(1,1.1)" x="0" y="0" fill="#000" text-anchor="start" font-size="11" font-weight="normal" xml:space="preserve">Schneefall</text>
<text transform="translate(552,882) scale(1,1.1)" x="0" y="0" fill="#00ff00" text-anchor="end" font-size="11" font-weight="bold" xml:space="preserve" letter-spacing="0.35">1003.9</text>
<text transform="translate(566,818) scale(1,1.1)" x="0" y="0" fill="#000" text-anchor="start" font-size="11" font-weight="bold" xml:space="preserve" letter-spacing="0.35">Windböen</text>
<text transform="translate(670,818) scale(1,1.1)" x="0" y="0" fill="#000" text-anchor="end" font-size="11" font-weight="bold" xml:space="preserve" letter-spacing="0.35">km/h</text>
<text transform="translate(566,834) scale(1,1.1)" x="0" y="0" fill="#000" text-anchor="start" font-size="11" font-weight="normal" xml:space="preserve">Ø 10 min.</text>
<text transform="translate(670,834) scale(1,1.1)" x="0" y="0" fill="#000" text-anchor="end" font-size="11" font-weight="normal" xml:space="preserve">0.0</text>
<text transform="translate(572,850) scale(1,1.1)" x="0" y="0" fill="#000" text-anchor="start" font-size="11" font-weight="normal" xml:space="preserve">14:04</text>
<text transform="translate(670,850) scale(1,1.1)" x="0" y="0" fill="#000" text-anchor="end" font-size="11" font-weight="normal" xml:space="preserve">SO 22.5</text>
<text transform="translate(572,866) scale(1,1.1)" x="0" y="0" fill="#000" text-anchor="start" font-size="11" font-weight="normal" xml:space="preserve">96.9 km</text>
<text transform="translate(670,866) scale(1,1.1)" x="0" y="0" fill="#000" text-anchor="end" font-size="11" font-weight="normal" xml:space="preserve">4.0</text>
<text transform="translate(572,882) scale(1,1.1)" x="0" y="0" fill="#000" text-anchor="start" font-size="11" font-weight="normal" xml:space="preserve">0 Bft S-SO</text>
<text transform="translate(670,882) scale(1,1.1)" x="0" y="0" fill="#000" text-anchor="end" font-size="11" font-weight="bold" xml:space="preserve" letter-spacing="0.35">0.0</text>
<text transform="translate(684,818) scale(1,1.1)" x="0" y="0" fill="#000" text-anchor="start" font-size="11" font-weight="bold" xml:space="preserve" letter-spacing="0.35">Regen</text>
<text transform="translate(788,818) scale(1,1.1)" x="0" y="0" fill="#000" text-anchor="end" font-size="11" font-weight="bold" xml:space="preserve" letter-spacing="0.35">l/m²</text>
<text transform="translate(684,834) scale(1,1.1)" x="0" y="0" fill="#000" text-anchor="start" font-size="11" font-weight="normal" xml:space="preserve">0 min.</text>
<text transform="translate(690,850) scale(1,1.1)" x="0" y="0" fill="#000" text-anchor="start" font-size="11" font-weight="normal" xml:space="preserve">23:58</text>
<text transform="translate(788,850) scale(1,1.1)" x="0" y="0" fill="#000" text-anchor="end" font-size="11" font-weight="normal" xml:space="preserve">0.0</text>
<text transform="translate(684,866) scale(1,1.1)" x="0" y="0" fill="#000" text-anchor="start" font-size="11" font-weight="normal" xml:space="preserve">Gesamt:</text>
<text transform="translate(788,866) scale(1,1.1)" x="0" y="0" fill="#000" text-anchor="end" font-size="11" font-weight="normal" xml:space="preserve">0.0</text>
<text transform="translate(687,882) scale(1,1.1)" x="0" y="0" fill="#000" text-anchor="start" font-size="11" font-weight="normal" xml:space="preserve">0.0 l/m²</text>
<text transform="translate(788,882) scale(1,1.1)" x="0" y="0" fill="#000" text-anchor="end" font-size="11" font-weight="bold" xml:space="preserve" letter-spacing="0.35">0.0</text>
<text transform="translate(802,818) scale(1,1.1)" x="0" y="0" fill="#000" text-anchor="start" font-size="11" font-weight="bold" xml:space="preserve" letter-spacing="0.35">Zeit Sonne</text>
<text transform="translate(905,818) scale(1,1.1)" x="0" y="0" fill="#000" text-anchor="end" font-size="11" font-weight="bold" xml:space="preserve" letter-spacing="0.35">min</text>
<text transform="translate(808,850) scale(1,1.1)" x="0" y="0" fill="#000" text-anchor="start" font-size="11" font-weight="normal" xml:space="preserve">16:28</text>
<text transform="translate(905,850) scale(1,1.1)" x="0" y="0" fill="#000" text-anchor="end" font-size="11" font-weight="normal" xml:space="preserve">2</text>
<text transform="translate(802,866) scale(1,1.1)" x="0" y="0" fill="#000" text-anchor="start" font-size="11" font-weight="normal" xml:space="preserve">5:44 h</text>
<text transform="translate(905,866) scale(1,1.1)" x="0" y="0" fill="#000" text-anchor="end" font-size="11" font-weight="normal" xml:space="preserve">0</text>
<text transform="translate(905,882) scale(1,1.1)" x="0" y="0" fill="#000" text-anchor="end" font-size="11" font-weight="bold" xml:space="preserve" letter-spacing="0.35">0</text>
<text transform="translate(920,818) scale(1,1.1)" x="0" y="0" fill="#000" text-anchor="start" font-size="11" font-weight="normal" xml:space="preserve">Wolkenunterg</text>
<text transform="translate(1022,818) scale(1,1.1)" x="0" y="0" fill="#000" text-anchor="end" font-size="11" font-weight="normal" xml:space="preserve">341m</text>
<text transform="translate(920,834) scale(1,1.1)" x="0" y="0" fill="#000" text-anchor="start" font-size="11" font-weight="normal" xml:space="preserve">Sichtweite</text>
<text transform="translate(1022,834) scale(1,1.1)" x="0" y="0" fill="#000" text-anchor="end" font-size="11" font-weight="normal" xml:space="preserve">8-14km</text>
<text transform="translate(920,850) scale(1,1.1)" x="0" y="0" fill="#000" text-anchor="start" font-size="11" font-weight="normal" xml:space="preserve">Regen/Tag</text>
<text transform="translate(1022,850) scale(1,1.1)" x="0" y="0" fill="#000" text-anchor="end" font-size="11" font-weight="normal" xml:space="preserve">0.0l/m²</text>
<text transform="translate(920,866) scale(1,1.1)" x="0" y="0" fill="#000" text-anchor="start" font-size="11" font-weight="normal" xml:space="preserve">Neumond</text>
<text transform="translate(1022,866) scale(1,1.1)" x="0" y="0" fill="#000" text-anchor="end" font-size="11" font-weight="normal" xml:space="preserve">17.02.26</text>
<text transform="translate(920,882) scale(1,1.1)" x="0" y="0" fill="#000" text-anchor="start" font-size="11" font-weight="normal" xml:space="preserve">Vollmond</text>
<text transform="translate(1022,882) scale(1,1.1)" x="0" y="0" fill="#000" text-anchor="end" font-size="11" font-weight="normal" xml:space="preserve">01.02.26</text>
<text transform="translate(11,798) scale(1,1.1)" x="0" y="0" fill="#000" text-anchor="start" font-size="11" font-weight="normal" >08:37</text>
<path d="M40,797 L40,793 L42,793 L42,792 L44,792 L44,791 L46,791 L46,792 L48,792 L48,793 L49,793 L49,797 Z" fill="#ffff00"/>
<text transform="translate(605,798) scale(1,1.1)" x="0" y="0" fill="#000" text-anchor="start" font-size="11" font-weight="normal" >08:04</text>
<circle cx="638.5" cy="793.5" r="3.5" fill="#ffff00" shape-rendering="auto"/>
<circle cx="638.5" cy="793.5" r="5.5" fill="none" stroke="#ffffa0" stroke-width="1" shape-rendering="auto"/>
<rect x="637" y="764" width="2" height="13" fill="#ffff00"/>
<rect x="725" y="764" width="2" height="12" fill="#808080"/>
<rect x="721" y="788" width="11" height="11" fill="#101090"/>
<circle cx="724" cy="791" r="2.5" fill="#fff" shape-rendering="auto"/>
<path d="M728,791 L730,795 L729,795 L729,799 L727,799 L727,795 L726,795 Z" fill="#ffff00"/>
<text transform="translate(733,798) scale(1,1.1)" x="0" y="0" fill="#000" text-anchor="start" font-size="11" font-weight="normal" >09:38</text>
<text transform="translate(1087,798) scale(1,1.1)" x="0" y="0" fill="#000" text-anchor="start" font-size="11" font-weight="normal" >16:41</text>
<rect x="1117.5" y="791.5" width="5" height="5" fill="none" stroke="#ffff00" stroke-width="1"/>
<rect x="1119" y="764" width="2" height="13" fill="#ffff00"/>
<rect x="1363" y="764" width="2" height="12" fill="#808080"/>
<rect x="1359" y="788" width="11" height="11" fill="#101090"/>
<path d="M1362,788 L1364,788 L1364,791 L1366,791 L1363,796 L1360,791 L1362,791 Z" fill="#ffff00"/>
<circle cx="1367" cy="797" r="2" fill="#fff" shape-rendering="auto"/>
<text transform="translate(1371,798) scale(1,1.1)" x="0" y="0" fill="#000" text-anchor="start" font-size="11" font-weight="normal" >21:03</text>
</svg></body></html>
